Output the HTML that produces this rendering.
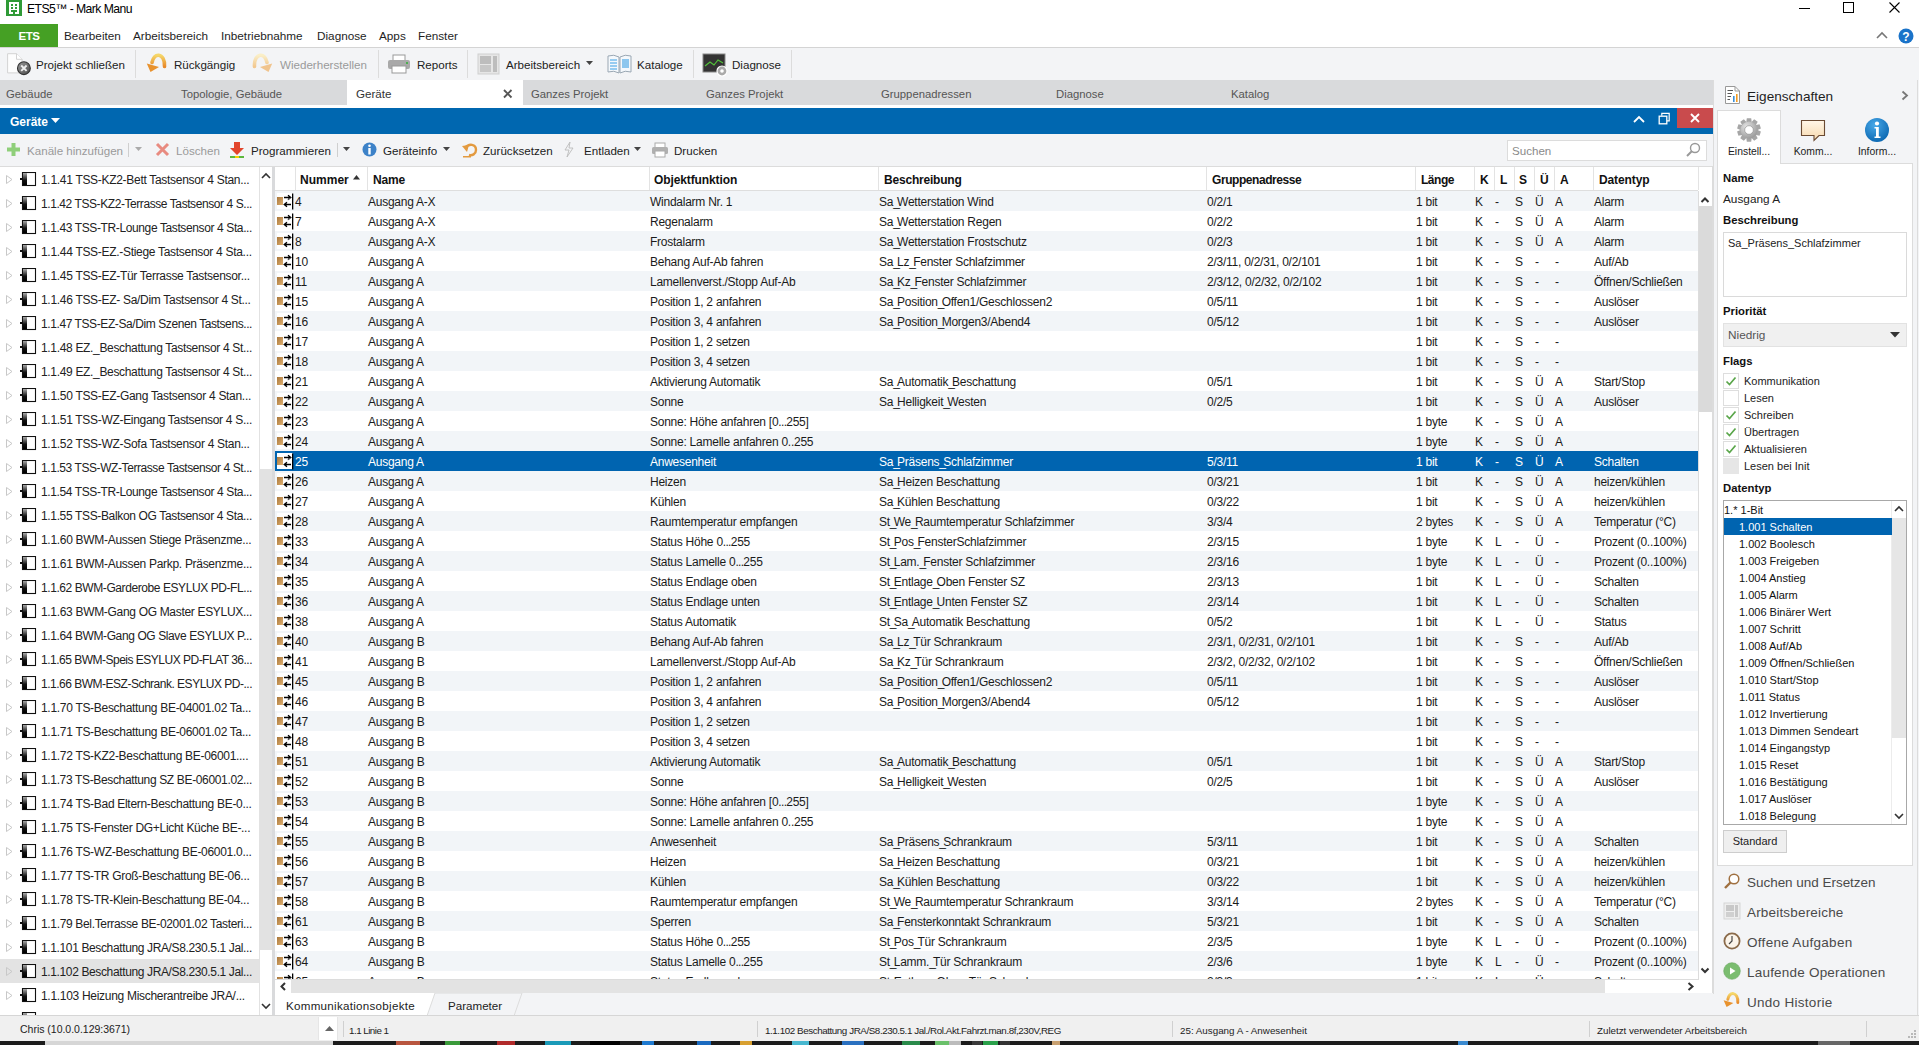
<!DOCTYPE html>
<html><head><meta charset="utf-8"><title>ETS5</title>
<style>
html,body{margin:0;padding:0;width:1919px;height:1045px;overflow:hidden;background:#fff;}
body{position:relative;font-family:"Liberation Sans",sans-serif;}
.t{position:absolute;white-space:nowrap;}
.r{position:absolute;}
.u{font-style:normal;letter-spacing:-2.8px;}
.e{font-style:normal;letter-spacing:-0.7px;}
</style></head><body>
<div class="r" style="left:0px;top:0px;width:1919px;height:24px;background:#ffffff;"></div>
<svg class="r" style="left:6px;top:0px;" width="16" height="16" viewBox="0 0 16 16"><rect x="0" y="0" width="16" height="16" fill="#2f9a36"/><rect x="3" y="2" width="10" height="12" fill="#fff"/><g fill="#2f9a36"><rect x="5" y="4" width="2" height="2"/><rect x="9" y="4" width="2" height="2"/><rect x="5" y="7" width="2" height="2"/><rect x="9" y="7" width="2" height="2"/><rect x="5" y="10" width="2" height="2"/><rect x="9" y="10" width="2" height="2"/><rect x="7" y="10" width="2" height="4"/></g></svg>
<div class="t" style="left:27px;top:0px;font-size:12.2px;line-height:18px;color:#000;letter-spacing:-0.563px;">ETS5™ - Mark Manu</div>
<div class="r" style="left:1799px;top:8px;width:11px;height:1px;background:#000;"></div>
<svg class="r" style="left:1843px;top:2px;" width="12" height="12" viewBox="0 0 12 12"><rect x="0.5" y="0.5" width="10" height="10" fill="none" stroke="#000" stroke-width="1"/></svg>
<svg class="r" style="left:1889px;top:2px;" width="12" height="12" viewBox="0 0 12 12"><path d="M0.5 0.5 L10.5 10.5 M10.5 0.5 L0.5 10.5" stroke="#000" stroke-width="1.1"/></svg>
<div class="r" style="left:0px;top:24px;width:1919px;height:23px;background:#ffffff;"></div>
<div class="r" style="left:0px;top:24px;width:58px;height:23px;background:#45a024;"></div>
<div class="t" style="left:0px;top:25px;font-size:11.5px;line-height:23px;color:#fff;font-weight:bold;width:58px;text-align:center;letter-spacing:-0.5px;">ETS</div>
<div class="t" style="left:64px;top:24px;font-size:11.75px;line-height:23px;color:#1e1e1e;">Bearbeiten</div>
<div class="t" style="left:133px;top:24px;font-size:11.75px;line-height:23px;color:#1e1e1e;">Arbeitsbereich</div>
<div class="t" style="left:221px;top:24px;font-size:11.75px;line-height:23px;color:#1e1e1e;">Inbetriebnahme</div>
<div class="t" style="left:317px;top:24px;font-size:11.75px;line-height:23px;color:#1e1e1e;">Diagnose</div>
<div class="t" style="left:379px;top:24px;font-size:11.75px;line-height:23px;color:#1e1e1e;">Apps</div>
<div class="t" style="left:418px;top:24px;font-size:11.75px;line-height:23px;color:#1e1e1e;">Fenster</div>
<svg class="r" style="left:1876px;top:31px;" width="12" height="8" viewBox="0 0 12 8"><path d="M1 7 L6 2 L11 7" fill="none" stroke="#777" stroke-width="1.6"/></svg>
<svg class="r" style="left:1898px;top:28px;" width="16" height="16" viewBox="0 0 16 16"><circle cx="8" cy="8" r="7.5" fill="#1a73c9"/><text x="8" y="12.5" font-family="Liberation Sans" font-weight="bold" font-size="12" fill="#fff" text-anchor="middle">?</text></svg>
<div class="r" style="left:0px;top:47px;width:1919px;height:1px;background:#d4d4d4;"></div>
<div class="r" style="left:0px;top:48px;width:1919px;height:32px;background:#f3f4f6;"></div>
<svg class="r" style="left:6px;top:52px;" width="26" height="24" viewBox="0 0 26 24"><defs><linearGradient id="xg" x1="0" y1="0" x2="1" y2="1"><stop offset="0" stop-color="#9a9a9a"/><stop offset="1" stop-color="#4a4a4a"/></linearGradient></defs><path d="M1.6 1.7 H10.5 L16.1 7.3 V20.9 H1.6 Z" fill="#fdfdfd" stroke="#d3d3d3" stroke-width="1"/><path d="M10.5 1.7 V7.3 H16.1" fill="#fff" stroke="#d3d3d3" stroke-width="1"/><circle cx="17.9" cy="16.2" r="6.4" fill="url(#xg)" stroke="#333" stroke-width="1.1"/><path d="M15.2 13.5 L20.6 18.9 M20.6 13.5 L15.2 18.9" stroke="#eee" stroke-width="1.9"/></svg>
<div class="t" style="left:36px;top:49px;font-size:11.6px;line-height:32px;color:#222;">Projekt schließen</div>
<div class="r" style="left:135px;top:50px;width:1px;height:28px;background:#dcdcdc;"></div>
<svg class="r" style="left:146px;top:52px;" width="22" height="22" viewBox="0 0 22 22"><defs><linearGradient id="ug" x1="0" y1="0" x2="0" y2="1"><stop offset="0" stop-color="#f5d76a"/><stop offset="1" stop-color="#e88a2a"/></linearGradient><linearGradient id="rg" x1="0" y1="0" x2="0" y2="1"><stop offset="0" stop-color="#faefc8"/><stop offset="1" stop-color="#f2c890"/></linearGradient></defs><path d="M18.5 14.5 C19 7.5 16 3.5 12.8 3.2 C9.5 3 7 6 6 10.5" fill="none" stroke="url(#ug)" stroke-width="3.6" stroke-linecap="round"/><path d="M0.8 11.5 L4.5 20 L13 15 Z" fill="#e8922e"/></svg>
<div class="t" style="left:174px;top:49px;font-size:11.6px;line-height:32px;color:#222;">Rückgängig</div>
<svg class="r" style="left:251px;top:52px;" width="22" height="22" viewBox="0 0 22 22"><g transform="translate(22,0) scale(-1,1)"><path d="M18.5 14.5 C19 7.5 16 3.5 12.8 3.2 C9.5 3 7 6 6 10.5" fill="none" stroke="url(#rg)" stroke-width="3.6" stroke-linecap="round"/><path d="M0.8 11.5 L4.5 20 L13 15 Z" fill="#f0c48e"/></g></svg>
<div class="t" style="left:280px;top:49px;font-size:11.6px;line-height:32px;color:#9a9a9a;">Wiederherstellen</div>
<div class="r" style="left:378px;top:50px;width:1px;height:28px;background:#dcdcdc;"></div>
<svg class="r" style="left:387px;top:54px;" width="24" height="20" viewBox="0 0 24 20"><rect x="6" y="1" width="12" height="6" fill="#fff" stroke="#999"/><rect x="1" y="6" width="22" height="9" rx="2" fill="#a9a9a9"/><rect x="5" y="12" width="14" height="7" fill="#fff" stroke="#999"/><rect x="19" y="8" width="2" height="2" fill="#4caf50"/></svg>
<div class="t" style="left:417px;top:49px;font-size:11.6px;line-height:32px;color:#222;">Reports</div>
<div class="r" style="left:467px;top:50px;width:1px;height:28px;background:#dcdcdc;"></div>
<svg class="r" style="left:477px;top:53px;" width="24" height="22" viewBox="0 0 24 22"><rect x="1" y="1" width="21" height="20" fill="#e6e6e6" stroke="#cfcfcf"/><rect x="3" y="3" width="11" height="8" fill="#bdbdbd"/><rect x="3" y="12" width="11" height="7" fill="#c7c7c7"/><rect x="16" y="3" width="4" height="16" fill="#bdbdbd"/></svg>
<div class="t" style="left:506px;top:49px;font-size:11.6px;line-height:32px;color:#222;">Arbeitsbereich</div>
<svg class="r" style="left:586px;top:61px;" width="8" height="5" viewBox="0 0 8 5"><path d="M0 0 H7 L3.5 4 Z" fill="#444"/></svg>
<svg class="r" style="left:607px;top:53px;" width="26" height="22" viewBox="0 0 26 22"><path d="M1 3 Q7 1 12 4 V20 Q7 17 1 19 Z" fill="#f4f8fc" stroke="#9aa7b3"/><path d="M24 3 Q18 1 13 4 V20 Q18 17 24 19 Z" fill="#f4f8fc" stroke="#9aa7b3"/><path d="M3 7 H10 M3 10 H10 M3 13 H10 M3 16 H10" stroke="#3aa0e6" stroke-width="1"/><rect x="15" y="6" width="7" height="9" fill="#8cc6ee"/></svg>
<div class="t" style="left:637px;top:49px;font-size:11.6px;line-height:32px;color:#222;">Kataloge</div>
<div class="r" style="left:693px;top:50px;width:1px;height:28px;background:#dcdcdc;"></div>
<svg class="r" style="left:702px;top:53px;" width="26" height="24" viewBox="0 0 26 24"><rect x="1" y="1" width="22" height="18" fill="#333" stroke="#888"/><path d="M3 13 L8 9 L12 12 L16 7 L21 10" fill="none" stroke="#52c03a" stroke-width="1.2"/><circle cx="20" cy="18" r="5" fill="#aaa" stroke="#fff" stroke-width="1.2"/><circle cx="20" cy="18" r="1.8" fill="#fff"/></svg>
<div class="t" style="left:732px;top:49px;font-size:11.6px;line-height:32px;color:#222;">Diagnose</div>
<div class="r" style="left:791px;top:50px;width:1px;height:28px;background:#dcdcdc;"></div>
<div class="r" style="left:0px;top:80px;width:1713px;height:25px;background:#d9dadc;"></div>
<div class="t" style="left:6px;top:80px;font-size:11.3px;line-height:28px;color:#555;">Gebäude</div>
<div class="t" style="left:181px;top:80px;font-size:11.3px;line-height:28px;color:#555;">Topologie, Gebäude</div>
<div class="t" style="left:531px;top:80px;font-size:11.3px;line-height:28px;color:#555;">Ganzes Projekt</div>
<div class="t" style="left:706px;top:80px;font-size:11.3px;line-height:28px;color:#555;">Ganzes Projekt</div>
<div class="t" style="left:881px;top:80px;font-size:11.3px;line-height:28px;color:#555;">Gruppenadressen</div>
<div class="t" style="left:1056px;top:80px;font-size:11.3px;line-height:28px;color:#555;">Diagnose</div>
<div class="t" style="left:1231px;top:80px;font-size:11.3px;line-height:28px;color:#555;">Katalog</div>
<div class="r" style="left:347px;top:80px;width:176px;height:25px;background:#ffffff;"></div>
<div class="t" style="left:356px;top:80px;font-size:11.6px;line-height:28px;color:#333;">Geräte</div>
<svg class="r" style="left:503px;top:89px;" width="10" height="10" viewBox="0 0 10 10"><path d="M1 1 L8.5 8.5 M8.5 1 L1 8.5" stroke="#555" stroke-width="1.9"/></svg>
<div class="r" style="left:0px;top:105px;width:1713px;height:3px;background:#ffffff;"></div>
<div class="r" style="left:0px;top:108px;width:1713px;height:26px;background:#0067b0;"></div>
<div class="t" style="left:10px;top:109px;font-size:12px;line-height:26px;color:#fff;font-weight:bold;">Geräte</div>
<svg class="r" style="left:51px;top:118px;" width="9" height="6" viewBox="0 0 9 6"><path d="M0 0 H9 L4.5 5 Z" fill="#fff"/></svg>
<svg class="r" style="left:1633px;top:115px;" width="12" height="8" viewBox="0 0 12 8"><path d="M1 7 L6 2 L11 7" fill="none" stroke="#fff" stroke-width="1.8"/></svg>
<svg class="r" style="left:1658px;top:112px;" width="13" height="13" viewBox="0 0 13 13"><rect x="1.2" y="4.2" width="7.6" height="7.6" fill="none" stroke="#fff" stroke-width="1.3"/><path d="M3.8 3.8 V1.3 H11.2 V8.8 H9" fill="none" stroke="#fff" stroke-width="1.2"/></svg>
<div class="r" style="left:1677px;top:108px;width:36px;height:20px;background:#c94b4d;"></div>
<svg class="r" style="left:1690px;top:113px;" width="10" height="10" viewBox="0 0 10 10"><path d="M1 1 L9 9 M9 1 L1 9" stroke="#fff" stroke-width="1.9"/></svg>
<div class="r" style="left:0px;top:134px;width:1713px;height:32px;background:#f3f4f6;"></div>
<svg class="r" style="left:6px;top:142px;" width="15" height="15" viewBox="0 0 15 15"><rect x="5.5" y="1" width="4" height="13" fill="#8fcf7a"/><rect x="1" y="5.5" width="13" height="4" fill="#8fcf7a"/></svg>
<div class="t" style="left:27px;top:135px;font-size:11.6px;line-height:32px;color:#9a9a9a;">Kanäle hinzufügen</div>
<div class="r" style="left:128px;top:143px;width:1px;height:14px;background:#cfcfcf;"></div>
<svg class="r" style="left:135px;top:147px;" width="8" height="5" viewBox="0 0 8 5"><path d="M0 0 H7 L3.5 4 Z" fill="#aaa"/></svg>
<svg class="r" style="left:155px;top:142px;" width="15" height="15" viewBox="0 0 15 15"><path d="M2 2 L13 13 M13 2 L2 13" stroke="#e88b80" stroke-width="3"/></svg>
<div class="t" style="left:176px;top:135px;font-size:11.6px;line-height:32px;color:#9a9a9a;">Löschen</div>
<svg class="r" style="left:229px;top:141px;" width="16" height="17" viewBox="0 0 16 17"><path d="M5 1 H11 V7 H15 L8 14 L1 7 H5 Z" fill="#e2452c"/><rect x="1" y="15" width="14" height="2" fill="#5cb83c"/><rect x="6" y="15" width="4" height="2" fill="#f5d000"/></svg>
<div class="t" style="left:251px;top:135px;font-size:11.6px;line-height:32px;color:#222;">Programmieren</div>
<div class="r" style="left:337px;top:143px;width:1px;height:14px;background:#cfcfcf;"></div>
<svg class="r" style="left:343px;top:147px;" width="8" height="5" viewBox="0 0 8 5"><path d="M0 0 H7 L3.5 4 Z" fill="#444"/></svg>
<svg class="r" style="left:362px;top:142px;" width="15" height="15" viewBox="0 0 15 15"><circle cx="7.5" cy="7.5" r="7" fill="#3d82c8"/><rect x="6.3" y="6" width="2.4" height="6.5" fill="#fff"/><circle cx="7.5" cy="3.8" r="1.3" fill="#fff"/></svg>
<div class="t" style="left:383px;top:135px;font-size:11.6px;line-height:32px;color:#222;">Geräteinfo</div>
<svg class="r" style="left:443px;top:147px;" width="8" height="5" viewBox="0 0 8 5"><path d="M0 0 H7 L3.5 4 Z" fill="#444"/></svg>
<svg class="r" style="left:461px;top:142px;" width="17" height="16" viewBox="0 0 17 16"><path d="M4 6 C8 1 15 2 15 8 C15 12 11 14 8 13" fill="none" stroke="#e39a3f" stroke-width="2.4"/><path d="M1 4 L6 10 L8 3 Z" fill="#e39a3f"/><rect x="2" y="14" width="8" height="1.5" fill="#e39a3f"/></svg>
<div class="t" style="left:483px;top:135px;font-size:11.6px;line-height:32px;color:#222;">Zurücksetzen</div>
<svg class="r" style="left:563px;top:141px;" width="12" height="17" viewBox="0 0 12 17"><path d="M7 1 L2 9 H6 L4 16 L10 7 H6 Z" fill="none" stroke="#bbb" stroke-width="0.9"/></svg>
<div class="t" style="left:584px;top:135px;font-size:11.6px;line-height:32px;color:#222;">Entladen</div>
<svg class="r" style="left:634px;top:147px;" width="8" height="5" viewBox="0 0 8 5"><path d="M0 0 H7 L3.5 4 Z" fill="#444"/></svg>
<svg class="r" style="left:651px;top:142px;" width="18" height="16" viewBox="0 0 18 16"><rect x="4" y="1" width="10" height="5" fill="#fff" stroke="#aaa"/><rect x="1" y="5" width="16" height="7" rx="1.5" fill="#b0b0b0"/><rect x="4" y="9" width="10" height="6" fill="#fff" stroke="#aaa"/></svg>
<div class="t" style="left:674px;top:135px;font-size:11.6px;line-height:32px;color:#222;">Drucken</div>
<div class="r" style="left:1507px;top:140px;width:200px;height:21px;background:#ffffff;border:1px solid #dcdcdc;box-sizing:border-box;"></div>
<div class="t" style="left:1512px;top:140px;font-size:11.6px;line-height:21px;color:#8a8a8a;">Suchen</div>
<svg class="r" style="left:1685px;top:142px;" width="16" height="16" viewBox="0 0 16 16"><circle cx="10" cy="6" r="4.5" fill="none" stroke="#999" stroke-width="1.4"/><path d="M7 9 L2 14" stroke="#999" stroke-width="2"/></svg>
<div class="r" style="left:0px;top:166px;width:1713px;height:1px;background:#dcdcdc;"></div>
<div class="r" style="left:0px;top:167px;width:259px;height:849px;background:#ffffff;"></div>
<svg width="0" height="0" style="position:absolute"><defs><linearGradient id="dg" x1="0" y1="0" x2="0" y2="1"><stop offset="0" stop-color="#aaa"/><stop offset="0.6" stop-color="#111"/><stop offset="1" stop-color="#000"/></linearGradient></defs></svg>
<svg class="r" style="left:6px;top:175px;" width="7" height="9" viewBox="0 0 7 9"><path d="M0.5 0.5 L6 4.5 L0.5 8.5 Z" fill="none" stroke="#c8c8c8" stroke-width="1"/></svg>
<svg class="r" style="left:20px;top:172px;" width="17" height="15" viewBox="0 0 17 15"><path d="M22.5 6.5 H21 V8.5 H22.5" fill="#000"/><rect x="2.5" y="0.5" width="13" height="13" fill="#fff" stroke="#111" stroke-width="1.1"/><rect x="3" y="1" width="4" height="12" fill="url(#dg)"/><rect x="0" y="6" width="2.5" height="2" fill="#111"/></svg>
<div class="t" style="left:41px;top:168px;font-size:12px;line-height:24px;color:#222;letter-spacing:-0.3px;">1.1.41 TSS-KZ2-Bett Tastsensor 4 Stan...</div>
<svg class="r" style="left:6px;top:199px;" width="7" height="9" viewBox="0 0 7 9"><path d="M0.5 0.5 L6 4.5 L0.5 8.5 Z" fill="none" stroke="#c8c8c8" stroke-width="1"/></svg>
<svg class="r" style="left:20px;top:196px;" width="17" height="15" viewBox="0 0 17 15"><path d="M22.5 6.5 H21 V8.5 H22.5" fill="#000"/><rect x="2.5" y="0.5" width="13" height="13" fill="#fff" stroke="#111" stroke-width="1.1"/><rect x="3" y="1" width="4" height="12" fill="url(#dg)"/><rect x="0" y="6" width="2.5" height="2" fill="#111"/></svg>
<div class="t" style="left:41px;top:192px;font-size:12px;line-height:24px;color:#222;letter-spacing:-0.423px;">1.1.42 TSS-KZ2-Terrasse Tastsensor 4 S...</div>
<svg class="r" style="left:6px;top:223px;" width="7" height="9" viewBox="0 0 7 9"><path d="M0.5 0.5 L6 4.5 L0.5 8.5 Z" fill="none" stroke="#c8c8c8" stroke-width="1"/></svg>
<svg class="r" style="left:20px;top:220px;" width="17" height="15" viewBox="0 0 17 15"><path d="M22.5 6.5 H21 V8.5 H22.5" fill="#000"/><rect x="2.5" y="0.5" width="13" height="13" fill="#fff" stroke="#111" stroke-width="1.1"/><rect x="3" y="1" width="4" height="12" fill="url(#dg)"/><rect x="0" y="6" width="2.5" height="2" fill="#111"/></svg>
<div class="t" style="left:41px;top:216px;font-size:12px;line-height:24px;color:#222;letter-spacing:-0.384px;">1.1.43 TSS-TR-Lounge Tastsensor 4 Sta...</div>
<svg class="r" style="left:6px;top:247px;" width="7" height="9" viewBox="0 0 7 9"><path d="M0.5 0.5 L6 4.5 L0.5 8.5 Z" fill="none" stroke="#c8c8c8" stroke-width="1"/></svg>
<svg class="r" style="left:20px;top:244px;" width="17" height="15" viewBox="0 0 17 15"><path d="M22.5 6.5 H21 V8.5 H22.5" fill="#000"/><rect x="2.5" y="0.5" width="13" height="13" fill="#fff" stroke="#111" stroke-width="1.1"/><rect x="3" y="1" width="4" height="12" fill="url(#dg)"/><rect x="0" y="6" width="2.5" height="2" fill="#111"/></svg>
<div class="t" style="left:41px;top:240px;font-size:12px;line-height:24px;color:#222;letter-spacing:-0.3px;">1.1.44 TSS-EZ.-Stiege Tastsensor 4 Sta...</div>
<svg class="r" style="left:6px;top:271px;" width="7" height="9" viewBox="0 0 7 9"><path d="M0.5 0.5 L6 4.5 L0.5 8.5 Z" fill="none" stroke="#c8c8c8" stroke-width="1"/></svg>
<svg class="r" style="left:20px;top:268px;" width="17" height="15" viewBox="0 0 17 15"><path d="M22.5 6.5 H21 V8.5 H22.5" fill="#000"/><rect x="2.5" y="0.5" width="13" height="13" fill="#fff" stroke="#111" stroke-width="1.1"/><rect x="3" y="1" width="4" height="12" fill="url(#dg)"/><rect x="0" y="6" width="2.5" height="2" fill="#111"/></svg>
<div class="t" style="left:41px;top:264px;font-size:12px;line-height:24px;color:#222;letter-spacing:-0.3px;">1.1.45 TSS-EZ-Tür Terrasse Tastsensor...</div>
<svg class="r" style="left:6px;top:295px;" width="7" height="9" viewBox="0 0 7 9"><path d="M0.5 0.5 L6 4.5 L0.5 8.5 Z" fill="none" stroke="#c8c8c8" stroke-width="1"/></svg>
<svg class="r" style="left:20px;top:292px;" width="17" height="15" viewBox="0 0 17 15"><path d="M22.5 6.5 H21 V8.5 H22.5" fill="#000"/><rect x="2.5" y="0.5" width="13" height="13" fill="#fff" stroke="#111" stroke-width="1.1"/><rect x="3" y="1" width="4" height="12" fill="url(#dg)"/><rect x="0" y="6" width="2.5" height="2" fill="#111"/></svg>
<div class="t" style="left:41px;top:288px;font-size:12px;line-height:24px;color:#222;letter-spacing:-0.3px;">1.1.46 TSS-EZ- Sa/Dim Tastsensor 4 St...</div>
<svg class="r" style="left:6px;top:319px;" width="7" height="9" viewBox="0 0 7 9"><path d="M0.5 0.5 L6 4.5 L0.5 8.5 Z" fill="none" stroke="#c8c8c8" stroke-width="1"/></svg>
<svg class="r" style="left:20px;top:316px;" width="17" height="15" viewBox="0 0 17 15"><path d="M22.5 6.5 H21 V8.5 H22.5" fill="#000"/><rect x="2.5" y="0.5" width="13" height="13" fill="#fff" stroke="#111" stroke-width="1.1"/><rect x="3" y="1" width="4" height="12" fill="url(#dg)"/><rect x="0" y="6" width="2.5" height="2" fill="#111"/></svg>
<div class="t" style="left:41px;top:312px;font-size:12px;line-height:24px;color:#222;letter-spacing:-0.410px;">1.1.47 TSS-EZ-Sa/Dim Szenen Tastsens...</div>
<svg class="r" style="left:6px;top:343px;" width="7" height="9" viewBox="0 0 7 9"><path d="M0.5 0.5 L6 4.5 L0.5 8.5 Z" fill="none" stroke="#c8c8c8" stroke-width="1"/></svg>
<svg class="r" style="left:20px;top:340px;" width="17" height="15" viewBox="0 0 17 15"><path d="M22.5 6.5 H21 V8.5 H22.5" fill="#000"/><rect x="2.5" y="0.5" width="13" height="13" fill="#fff" stroke="#111" stroke-width="1.1"/><rect x="3" y="1" width="4" height="12" fill="url(#dg)"/><rect x="0" y="6" width="2.5" height="2" fill="#111"/></svg>
<div class="t" style="left:41px;top:336px;font-size:12px;line-height:24px;color:#222;letter-spacing:-0.331px;">1.1.48 EZ._Beschattung Tastsensor 4 St...</div>
<svg class="r" style="left:6px;top:367px;" width="7" height="9" viewBox="0 0 7 9"><path d="M0.5 0.5 L6 4.5 L0.5 8.5 Z" fill="none" stroke="#c8c8c8" stroke-width="1"/></svg>
<svg class="r" style="left:20px;top:364px;" width="17" height="15" viewBox="0 0 17 15"><path d="M22.5 6.5 H21 V8.5 H22.5" fill="#000"/><rect x="2.5" y="0.5" width="13" height="13" fill="#fff" stroke="#111" stroke-width="1.1"/><rect x="3" y="1" width="4" height="12" fill="url(#dg)"/><rect x="0" y="6" width="2.5" height="2" fill="#111"/></svg>
<div class="t" style="left:41px;top:360px;font-size:12px;line-height:24px;color:#222;letter-spacing:-0.331px;">1.1.49 EZ._Beschattung Tastsensor 4 St...</div>
<svg class="r" style="left:6px;top:391px;" width="7" height="9" viewBox="0 0 7 9"><path d="M0.5 0.5 L6 4.5 L0.5 8.5 Z" fill="none" stroke="#c8c8c8" stroke-width="1"/></svg>
<svg class="r" style="left:20px;top:388px;" width="17" height="15" viewBox="0 0 17 15"><path d="M22.5 6.5 H21 V8.5 H22.5" fill="#000"/><rect x="2.5" y="0.5" width="13" height="13" fill="#fff" stroke="#111" stroke-width="1.1"/><rect x="3" y="1" width="4" height="12" fill="url(#dg)"/><rect x="0" y="6" width="2.5" height="2" fill="#111"/></svg>
<div class="t" style="left:41px;top:384px;font-size:12px;line-height:24px;color:#222;letter-spacing:-0.3px;">1.1.50 TSS-EZ-Gang Tastsensor 4 Stan...</div>
<svg class="r" style="left:6px;top:415px;" width="7" height="9" viewBox="0 0 7 9"><path d="M0.5 0.5 L6 4.5 L0.5 8.5 Z" fill="none" stroke="#c8c8c8" stroke-width="1"/></svg>
<svg class="r" style="left:20px;top:412px;" width="17" height="15" viewBox="0 0 17 15"><path d="M22.5 6.5 H21 V8.5 H22.5" fill="#000"/><rect x="2.5" y="0.5" width="13" height="13" fill="#fff" stroke="#111" stroke-width="1.1"/><rect x="3" y="1" width="4" height="12" fill="url(#dg)"/><rect x="0" y="6" width="2.5" height="2" fill="#111"/></svg>
<div class="t" style="left:41px;top:408px;font-size:12px;line-height:24px;color:#222;letter-spacing:-0.308px;">1.1.51 TSS-WZ-Eingang Tastsensor 4 S...</div>
<svg class="r" style="left:6px;top:439px;" width="7" height="9" viewBox="0 0 7 9"><path d="M0.5 0.5 L6 4.5 L0.5 8.5 Z" fill="none" stroke="#c8c8c8" stroke-width="1"/></svg>
<svg class="r" style="left:20px;top:436px;" width="17" height="15" viewBox="0 0 17 15"><path d="M22.5 6.5 H21 V8.5 H22.5" fill="#000"/><rect x="2.5" y="0.5" width="13" height="13" fill="#fff" stroke="#111" stroke-width="1.1"/><rect x="3" y="1" width="4" height="12" fill="url(#dg)"/><rect x="0" y="6" width="2.5" height="2" fill="#111"/></svg>
<div class="t" style="left:41px;top:432px;font-size:12px;line-height:24px;color:#222;letter-spacing:-0.3px;">1.1.52 TSS-WZ-Sofa Tastsensor 4 Stan...</div>
<svg class="r" style="left:6px;top:463px;" width="7" height="9" viewBox="0 0 7 9"><path d="M0.5 0.5 L6 4.5 L0.5 8.5 Z" fill="none" stroke="#c8c8c8" stroke-width="1"/></svg>
<svg class="r" style="left:20px;top:460px;" width="17" height="15" viewBox="0 0 17 15"><path d="M22.5 6.5 H21 V8.5 H22.5" fill="#000"/><rect x="2.5" y="0.5" width="13" height="13" fill="#fff" stroke="#111" stroke-width="1.1"/><rect x="3" y="1" width="4" height="12" fill="url(#dg)"/><rect x="0" y="6" width="2.5" height="2" fill="#111"/></svg>
<div class="t" style="left:41px;top:456px;font-size:12px;line-height:24px;color:#222;letter-spacing:-0.422px;">1.1.53 TSS-WZ-Terrasse Tastsensor 4 St...</div>
<svg class="r" style="left:6px;top:487px;" width="7" height="9" viewBox="0 0 7 9"><path d="M0.5 0.5 L6 4.5 L0.5 8.5 Z" fill="none" stroke="#c8c8c8" stroke-width="1"/></svg>
<svg class="r" style="left:20px;top:484px;" width="17" height="15" viewBox="0 0 17 15"><path d="M22.5 6.5 H21 V8.5 H22.5" fill="#000"/><rect x="2.5" y="0.5" width="13" height="13" fill="#fff" stroke="#111" stroke-width="1.1"/><rect x="3" y="1" width="4" height="12" fill="url(#dg)"/><rect x="0" y="6" width="2.5" height="2" fill="#111"/></svg>
<div class="t" style="left:41px;top:480px;font-size:12px;line-height:24px;color:#222;letter-spacing:-0.384px;">1.1.54 TSS-TR-Lounge Tastsensor 4 Sta...</div>
<svg class="r" style="left:6px;top:511px;" width="7" height="9" viewBox="0 0 7 9"><path d="M0.5 0.5 L6 4.5 L0.5 8.5 Z" fill="none" stroke="#c8c8c8" stroke-width="1"/></svg>
<svg class="r" style="left:20px;top:508px;" width="17" height="15" viewBox="0 0 17 15"><path d="M22.5 6.5 H21 V8.5 H22.5" fill="#000"/><rect x="2.5" y="0.5" width="13" height="13" fill="#fff" stroke="#111" stroke-width="1.1"/><rect x="3" y="1" width="4" height="12" fill="url(#dg)"/><rect x="0" y="6" width="2.5" height="2" fill="#111"/></svg>
<div class="t" style="left:41px;top:504px;font-size:12px;line-height:24px;color:#222;letter-spacing:-0.350px;">1.1.55 TSS-Balkon OG Tastsensor 4 Sta...</div>
<svg class="r" style="left:6px;top:535px;" width="7" height="9" viewBox="0 0 7 9"><path d="M0.5 0.5 L6 4.5 L0.5 8.5 Z" fill="none" stroke="#c8c8c8" stroke-width="1"/></svg>
<svg class="r" style="left:20px;top:532px;" width="17" height="15" viewBox="0 0 17 15"><path d="M22.5 6.5 H21 V8.5 H22.5" fill="#000"/><rect x="2.5" y="0.5" width="13" height="13" fill="#fff" stroke="#111" stroke-width="1.1"/><rect x="3" y="1" width="4" height="12" fill="url(#dg)"/><rect x="0" y="6" width="2.5" height="2" fill="#111"/></svg>
<div class="t" style="left:41px;top:528px;font-size:12px;line-height:24px;color:#222;letter-spacing:-0.3px;">1.1.60 BWM-Aussen Stiege Präsenzme...</div>
<svg class="r" style="left:6px;top:559px;" width="7" height="9" viewBox="0 0 7 9"><path d="M0.5 0.5 L6 4.5 L0.5 8.5 Z" fill="none" stroke="#c8c8c8" stroke-width="1"/></svg>
<svg class="r" style="left:20px;top:556px;" width="17" height="15" viewBox="0 0 17 15"><path d="M22.5 6.5 H21 V8.5 H22.5" fill="#000"/><rect x="2.5" y="0.5" width="13" height="13" fill="#fff" stroke="#111" stroke-width="1.1"/><rect x="3" y="1" width="4" height="12" fill="url(#dg)"/><rect x="0" y="6" width="2.5" height="2" fill="#111"/></svg>
<div class="t" style="left:41px;top:552px;font-size:12px;line-height:24px;color:#222;letter-spacing:-0.3px;">1.1.61 BWM-Aussen Parkp. Präsenzme...</div>
<svg class="r" style="left:6px;top:583px;" width="7" height="9" viewBox="0 0 7 9"><path d="M0.5 0.5 L6 4.5 L0.5 8.5 Z" fill="none" stroke="#c8c8c8" stroke-width="1"/></svg>
<svg class="r" style="left:20px;top:580px;" width="17" height="15" viewBox="0 0 17 15"><path d="M22.5 6.5 H21 V8.5 H22.5" fill="#000"/><rect x="2.5" y="0.5" width="13" height="13" fill="#fff" stroke="#111" stroke-width="1.1"/><rect x="3" y="1" width="4" height="12" fill="url(#dg)"/><rect x="0" y="6" width="2.5" height="2" fill="#111"/></svg>
<div class="t" style="left:41px;top:576px;font-size:12px;line-height:24px;color:#222;letter-spacing:-0.419px;">1.1.62 BWM-Garderobe ESYLUX PD-FL...</div>
<svg class="r" style="left:6px;top:607px;" width="7" height="9" viewBox="0 0 7 9"><path d="M0.5 0.5 L6 4.5 L0.5 8.5 Z" fill="none" stroke="#c8c8c8" stroke-width="1"/></svg>
<svg class="r" style="left:20px;top:604px;" width="17" height="15" viewBox="0 0 17 15"><path d="M22.5 6.5 H21 V8.5 H22.5" fill="#000"/><rect x="2.5" y="0.5" width="13" height="13" fill="#fff" stroke="#111" stroke-width="1.1"/><rect x="3" y="1" width="4" height="12" fill="url(#dg)"/><rect x="0" y="6" width="2.5" height="2" fill="#111"/></svg>
<div class="t" style="left:41px;top:600px;font-size:12px;line-height:24px;color:#222;letter-spacing:-0.317px;">1.1.63 BWM-Gang OG Master ESYLUX...</div>
<svg class="r" style="left:6px;top:631px;" width="7" height="9" viewBox="0 0 7 9"><path d="M0.5 0.5 L6 4.5 L0.5 8.5 Z" fill="none" stroke="#c8c8c8" stroke-width="1"/></svg>
<svg class="r" style="left:20px;top:628px;" width="17" height="15" viewBox="0 0 17 15"><path d="M22.5 6.5 H21 V8.5 H22.5" fill="#000"/><rect x="2.5" y="0.5" width="13" height="13" fill="#fff" stroke="#111" stroke-width="1.1"/><rect x="3" y="1" width="4" height="12" fill="url(#dg)"/><rect x="0" y="6" width="2.5" height="2" fill="#111"/></svg>
<div class="t" style="left:41px;top:624px;font-size:12px;line-height:24px;color:#222;letter-spacing:-0.395px;">1.1.64 BWM-Gang OG Slave ESYLUX P...</div>
<svg class="r" style="left:6px;top:655px;" width="7" height="9" viewBox="0 0 7 9"><path d="M0.5 0.5 L6 4.5 L0.5 8.5 Z" fill="none" stroke="#c8c8c8" stroke-width="1"/></svg>
<svg class="r" style="left:20px;top:652px;" width="17" height="15" viewBox="0 0 17 15"><path d="M22.5 6.5 H21 V8.5 H22.5" fill="#000"/><rect x="2.5" y="0.5" width="13" height="13" fill="#fff" stroke="#111" stroke-width="1.1"/><rect x="3" y="1" width="4" height="12" fill="url(#dg)"/><rect x="0" y="6" width="2.5" height="2" fill="#111"/></svg>
<div class="t" style="left:41px;top:648px;font-size:12px;line-height:24px;color:#222;letter-spacing:-0.504px;">1.1.65 BWM-Speis ESYLUX PD-FLAT 36...</div>
<svg class="r" style="left:6px;top:679px;" width="7" height="9" viewBox="0 0 7 9"><path d="M0.5 0.5 L6 4.5 L0.5 8.5 Z" fill="none" stroke="#c8c8c8" stroke-width="1"/></svg>
<svg class="r" style="left:20px;top:676px;" width="17" height="15" viewBox="0 0 17 15"><path d="M22.5 6.5 H21 V8.5 H22.5" fill="#000"/><rect x="2.5" y="0.5" width="13" height="13" fill="#fff" stroke="#111" stroke-width="1.1"/><rect x="3" y="1" width="4" height="12" fill="url(#dg)"/><rect x="0" y="6" width="2.5" height="2" fill="#111"/></svg>
<div class="t" style="left:41px;top:672px;font-size:12px;line-height:24px;color:#222;letter-spacing:-0.497px;">1.1.66 BWM-ESZ-Schrank. ESYLUX PD-...</div>
<svg class="r" style="left:6px;top:703px;" width="7" height="9" viewBox="0 0 7 9"><path d="M0.5 0.5 L6 4.5 L0.5 8.5 Z" fill="none" stroke="#c8c8c8" stroke-width="1"/></svg>
<svg class="r" style="left:20px;top:700px;" width="17" height="15" viewBox="0 0 17 15"><path d="M22.5 6.5 H21 V8.5 H22.5" fill="#000"/><rect x="2.5" y="0.5" width="13" height="13" fill="#fff" stroke="#111" stroke-width="1.1"/><rect x="3" y="1" width="4" height="12" fill="url(#dg)"/><rect x="0" y="6" width="2.5" height="2" fill="#111"/></svg>
<div class="t" style="left:41px;top:696px;font-size:12px;line-height:24px;color:#222;letter-spacing:-0.3px;">1.1.70 TS-Beschattung BE-04001.02 Ta...</div>
<svg class="r" style="left:6px;top:727px;" width="7" height="9" viewBox="0 0 7 9"><path d="M0.5 0.5 L6 4.5 L0.5 8.5 Z" fill="none" stroke="#c8c8c8" stroke-width="1"/></svg>
<svg class="r" style="left:20px;top:724px;" width="17" height="15" viewBox="0 0 17 15"><path d="M22.5 6.5 H21 V8.5 H22.5" fill="#000"/><rect x="2.5" y="0.5" width="13" height="13" fill="#fff" stroke="#111" stroke-width="1.1"/><rect x="3" y="1" width="4" height="12" fill="url(#dg)"/><rect x="0" y="6" width="2.5" height="2" fill="#111"/></svg>
<div class="t" style="left:41px;top:720px;font-size:12px;line-height:24px;color:#222;letter-spacing:-0.3px;">1.1.71 TS-Beschattung BE-06001.02 Ta...</div>
<svg class="r" style="left:6px;top:751px;" width="7" height="9" viewBox="0 0 7 9"><path d="M0.5 0.5 L6 4.5 L0.5 8.5 Z" fill="none" stroke="#c8c8c8" stroke-width="1"/></svg>
<svg class="r" style="left:20px;top:748px;" width="17" height="15" viewBox="0 0 17 15"><path d="M22.5 6.5 H21 V8.5 H22.5" fill="#000"/><rect x="2.5" y="0.5" width="13" height="13" fill="#fff" stroke="#111" stroke-width="1.1"/><rect x="3" y="1" width="4" height="12" fill="url(#dg)"/><rect x="0" y="6" width="2.5" height="2" fill="#111"/></svg>
<div class="t" style="left:41px;top:744px;font-size:12px;line-height:24px;color:#222;letter-spacing:-0.3px;">1.1.72 TS-KZ2-Beschattung BE-06001....</div>
<svg class="r" style="left:6px;top:775px;" width="7" height="9" viewBox="0 0 7 9"><path d="M0.5 0.5 L6 4.5 L0.5 8.5 Z" fill="none" stroke="#c8c8c8" stroke-width="1"/></svg>
<svg class="r" style="left:20px;top:772px;" width="17" height="15" viewBox="0 0 17 15"><path d="M22.5 6.5 H21 V8.5 H22.5" fill="#000"/><rect x="2.5" y="0.5" width="13" height="13" fill="#fff" stroke="#111" stroke-width="1.1"/><rect x="3" y="1" width="4" height="12" fill="url(#dg)"/><rect x="0" y="6" width="2.5" height="2" fill="#111"/></svg>
<div class="t" style="left:41px;top:768px;font-size:12px;line-height:24px;color:#222;letter-spacing:-0.348px;">1.1.73 TS-Beschattung SZ BE-06001.02...</div>
<svg class="r" style="left:6px;top:799px;" width="7" height="9" viewBox="0 0 7 9"><path d="M0.5 0.5 L6 4.5 L0.5 8.5 Z" fill="none" stroke="#c8c8c8" stroke-width="1"/></svg>
<svg class="r" style="left:20px;top:796px;" width="17" height="15" viewBox="0 0 17 15"><path d="M22.5 6.5 H21 V8.5 H22.5" fill="#000"/><rect x="2.5" y="0.5" width="13" height="13" fill="#fff" stroke="#111" stroke-width="1.1"/><rect x="3" y="1" width="4" height="12" fill="url(#dg)"/><rect x="0" y="6" width="2.5" height="2" fill="#111"/></svg>
<div class="t" style="left:41px;top:792px;font-size:12px;line-height:24px;color:#222;letter-spacing:-0.3px;">1.1.74 TS-Bad Eltern-Beschattung BE-0...</div>
<svg class="r" style="left:6px;top:823px;" width="7" height="9" viewBox="0 0 7 9"><path d="M0.5 0.5 L6 4.5 L0.5 8.5 Z" fill="none" stroke="#c8c8c8" stroke-width="1"/></svg>
<svg class="r" style="left:20px;top:820px;" width="17" height="15" viewBox="0 0 17 15"><path d="M22.5 6.5 H21 V8.5 H22.5" fill="#000"/><rect x="2.5" y="0.5" width="13" height="13" fill="#fff" stroke="#111" stroke-width="1.1"/><rect x="3" y="1" width="4" height="12" fill="url(#dg)"/><rect x="0" y="6" width="2.5" height="2" fill="#111"/></svg>
<div class="t" style="left:41px;top:816px;font-size:12px;line-height:24px;color:#222;letter-spacing:-0.3px;">1.1.75 TS-Fenster DG+Licht Küche BE-...</div>
<svg class="r" style="left:6px;top:847px;" width="7" height="9" viewBox="0 0 7 9"><path d="M0.5 0.5 L6 4.5 L0.5 8.5 Z" fill="none" stroke="#c8c8c8" stroke-width="1"/></svg>
<svg class="r" style="left:20px;top:844px;" width="17" height="15" viewBox="0 0 17 15"><path d="M22.5 6.5 H21 V8.5 H22.5" fill="#000"/><rect x="2.5" y="0.5" width="13" height="13" fill="#fff" stroke="#111" stroke-width="1.1"/><rect x="3" y="1" width="4" height="12" fill="url(#dg)"/><rect x="0" y="6" width="2.5" height="2" fill="#111"/></svg>
<div class="t" style="left:41px;top:840px;font-size:12px;line-height:24px;color:#222;letter-spacing:-0.3px;">1.1.76 TS-WZ-Beschattung BE-06001.0...</div>
<svg class="r" style="left:6px;top:871px;" width="7" height="9" viewBox="0 0 7 9"><path d="M0.5 0.5 L6 4.5 L0.5 8.5 Z" fill="none" stroke="#c8c8c8" stroke-width="1"/></svg>
<svg class="r" style="left:20px;top:868px;" width="17" height="15" viewBox="0 0 17 15"><path d="M22.5 6.5 H21 V8.5 H22.5" fill="#000"/><rect x="2.5" y="0.5" width="13" height="13" fill="#fff" stroke="#111" stroke-width="1.1"/><rect x="3" y="1" width="4" height="12" fill="url(#dg)"/><rect x="0" y="6" width="2.5" height="2" fill="#111"/></svg>
<div class="t" style="left:41px;top:864px;font-size:12px;line-height:24px;color:#222;letter-spacing:-0.3px;">1.1.77 TS-TR Groß-Beschattung BE-06...</div>
<svg class="r" style="left:6px;top:895px;" width="7" height="9" viewBox="0 0 7 9"><path d="M0.5 0.5 L6 4.5 L0.5 8.5 Z" fill="none" stroke="#c8c8c8" stroke-width="1"/></svg>
<svg class="r" style="left:20px;top:892px;" width="17" height="15" viewBox="0 0 17 15"><path d="M22.5 6.5 H21 V8.5 H22.5" fill="#000"/><rect x="2.5" y="0.5" width="13" height="13" fill="#fff" stroke="#111" stroke-width="1.1"/><rect x="3" y="1" width="4" height="12" fill="url(#dg)"/><rect x="0" y="6" width="2.5" height="2" fill="#111"/></svg>
<div class="t" style="left:41px;top:888px;font-size:12px;line-height:24px;color:#222;letter-spacing:-0.3px;">1.1.78 TS-TR-Klein-Beschattung BE-04...</div>
<svg class="r" style="left:6px;top:919px;" width="7" height="9" viewBox="0 0 7 9"><path d="M0.5 0.5 L6 4.5 L0.5 8.5 Z" fill="none" stroke="#c8c8c8" stroke-width="1"/></svg>
<svg class="r" style="left:20px;top:916px;" width="17" height="15" viewBox="0 0 17 15"><path d="M22.5 6.5 H21 V8.5 H22.5" fill="#000"/><rect x="2.5" y="0.5" width="13" height="13" fill="#fff" stroke="#111" stroke-width="1.1"/><rect x="3" y="1" width="4" height="12" fill="url(#dg)"/><rect x="0" y="6" width="2.5" height="2" fill="#111"/></svg>
<div class="t" style="left:41px;top:912px;font-size:12px;line-height:24px;color:#222;letter-spacing:-0.339px;">1.1.79 Bel.Terrasse BE-02001.02 Tasteri...</div>
<svg class="r" style="left:6px;top:943px;" width="7" height="9" viewBox="0 0 7 9"><path d="M0.5 0.5 L6 4.5 L0.5 8.5 Z" fill="none" stroke="#c8c8c8" stroke-width="1"/></svg>
<svg class="r" style="left:20px;top:940px;" width="17" height="15" viewBox="0 0 17 15"><path d="M22.5 6.5 H21 V8.5 H22.5" fill="#000"/><rect x="2.5" y="0.5" width="13" height="13" fill="#fff" stroke="#111" stroke-width="1.1"/><rect x="3" y="1" width="4" height="12" fill="url(#dg)"/><rect x="0" y="6" width="2.5" height="2" fill="#111"/></svg>
<div class="t" style="left:41px;top:936px;font-size:12px;line-height:24px;color:#222;letter-spacing:-0.370px;">1.1.101 Beschattung JRA/S8.230.5.1 Jal...</div>
<div class="r" style="left:0px;top:959px;width:259px;height:24px;background:#e3e3e3;"></div>
<svg class="r" style="left:6px;top:967px;" width="7" height="9" viewBox="0 0 7 9"><path d="M0.5 0.5 L6 4.5 L0.5 8.5 Z" fill="none" stroke="#c8c8c8" stroke-width="1"/></svg>
<svg class="r" style="left:20px;top:964px;" width="17" height="15" viewBox="0 0 17 15"><path d="M22.5 6.5 H21 V8.5 H22.5" fill="#000"/><rect x="2.5" y="0.5" width="13" height="13" fill="#fff" stroke="#111" stroke-width="1.1"/><rect x="3" y="1" width="4" height="12" fill="url(#dg)"/><rect x="0" y="6" width="2.5" height="2" fill="#111"/></svg>
<div class="t" style="left:41px;top:960px;font-size:12px;line-height:24px;color:#222;letter-spacing:-0.370px;">1.1.102 Beschattung JRA/S8.230.5.1 Jal...</div>
<svg class="r" style="left:6px;top:991px;" width="7" height="9" viewBox="0 0 7 9"><path d="M0.5 0.5 L6 4.5 L0.5 8.5 Z" fill="none" stroke="#c8c8c8" stroke-width="1"/></svg>
<svg class="r" style="left:20px;top:988px;" width="17" height="15" viewBox="0 0 17 15"><path d="M22.5 6.5 H21 V8.5 H22.5" fill="#000"/><rect x="2.5" y="0.5" width="13" height="13" fill="#fff" stroke="#111" stroke-width="1.1"/><rect x="3" y="1" width="4" height="12" fill="url(#dg)"/><rect x="0" y="6" width="2.5" height="2" fill="#111"/></svg>
<div class="t" style="left:41px;top:984px;font-size:12px;line-height:24px;color:#222;letter-spacing:-0.3px;">1.1.103 Heizung Mischerantreibe JRA/...</div>
<svg class="r" style="left:6px;top:1015px;" width="7" height="9" viewBox="0 0 7 9"><path d="M0.5 0.5 L6 4.5 L0.5 8.5 Z" fill="none" stroke="#c8c8c8" stroke-width="1"/></svg>
<svg class="r" style="left:20px;top:1012px;" width="17" height="15" viewBox="0 0 17 15"><path d="M22.5 6.5 H21 V8.5 H22.5" fill="#000"/><rect x="2.5" y="0.5" width="13" height="13" fill="#fff" stroke="#111" stroke-width="1.1"/><rect x="3" y="1" width="4" height="12" fill="url(#dg)"/><rect x="0" y="6" width="2.5" height="2" fill="#111"/></svg>
<div class="r" style="left:259px;top:167px;width:13px;height:849px;background:#ffffff;border-left:1px solid #e2e2e2;box-sizing:border-box;"></div>
<div class="r" style="left:260px;top:469px;width:12px;height:481px;background:#e2e2e2;"></div>
<svg class="r" style="left:261px;top:172px;" width="10" height="7" viewBox="0 0 10 7"><path d="M1 6 L5 2 L9 6" fill="none" stroke="#333" stroke-width="1.6"/></svg>
<svg class="r" style="left:261px;top:1003px;" width="10" height="7" viewBox="0 0 10 7"><path d="M1 1 L5 5 L9 1" fill="none" stroke="#333" stroke-width="1.6"/></svg>
<div class="r" style="left:272px;top:167px;width:3px;height:849px;background:#d9dadc;"></div>
<div class="r" style="left:275px;top:167px;width:1438px;height:813px;background:#ffffff;"></div>
<div class="r" style="left:295px;top:167px;width:1px;height:23px;background:#e3e3e3;"></div>
<div class="r" style="left:367px;top:167px;width:1px;height:23px;background:#e3e3e3;"></div>
<div class="r" style="left:649px;top:167px;width:1px;height:23px;background:#e3e3e3;"></div>
<div class="r" style="left:878px;top:167px;width:1px;height:23px;background:#e3e3e3;"></div>
<div class="r" style="left:1206px;top:167px;width:1px;height:23px;background:#e3e3e3;"></div>
<div class="r" style="left:1415px;top:167px;width:1px;height:23px;background:#e3e3e3;"></div>
<div class="r" style="left:1474px;top:167px;width:1px;height:23px;background:#e3e3e3;"></div>
<div class="r" style="left:1494px;top:167px;width:1px;height:23px;background:#e3e3e3;"></div>
<div class="r" style="left:1514px;top:167px;width:1px;height:23px;background:#e3e3e3;"></div>
<div class="r" style="left:1534px;top:167px;width:1px;height:23px;background:#e3e3e3;"></div>
<div class="r" style="left:1554px;top:167px;width:1px;height:23px;background:#e3e3e3;"></div>
<div class="r" style="left:1593px;top:167px;width:1px;height:23px;background:#e3e3e3;"></div>
<div class="r" style="left:1698px;top:167px;width:1px;height:23px;background:#e3e3e3;"></div>
<div class="r" style="left:275px;top:190px;width:1423px;height:1px;background:#dedede;"></div>
<div class="t" style="left:300px;top:169px;font-size:12px;line-height:22px;color:#111;font-weight:bold;letter-spacing:0.020px;">Nummer</div>
<div class="t" style="left:373px;top:169px;font-size:12px;line-height:22px;color:#111;font-weight:bold;letter-spacing:-0.2px;">Name</div>
<div class="t" style="left:654px;top:169px;font-size:12px;line-height:22px;color:#111;font-weight:bold;letter-spacing:-0.105px;">Objektfunktion</div>
<div class="t" style="left:884px;top:169px;font-size:12px;line-height:22px;color:#111;font-weight:bold;letter-spacing:-0.2px;">Beschreibung</div>
<div class="t" style="left:1212px;top:169px;font-size:12px;line-height:22px;color:#111;font-weight:bold;letter-spacing:-0.434px;">Gruppenadresse</div>
<div class="t" style="left:1421px;top:169px;font-size:12px;line-height:22px;color:#111;font-weight:bold;letter-spacing:-0.468px;">Länge</div>
<div class="t" style="left:1480px;top:169px;font-size:12px;line-height:22px;color:#111;font-weight:bold;letter-spacing:-0.2px;">K</div>
<div class="t" style="left:1500px;top:169px;font-size:12px;line-height:22px;color:#111;font-weight:bold;letter-spacing:-0.2px;">L</div>
<div class="t" style="left:1519px;top:169px;font-size:12px;line-height:22px;color:#111;font-weight:bold;letter-spacing:-0.2px;">S</div>
<div class="t" style="left:1540px;top:169px;font-size:12px;line-height:22px;color:#111;font-weight:bold;letter-spacing:-0.2px;">Ü</div>
<div class="t" style="left:1560px;top:169px;font-size:12px;line-height:22px;color:#111;font-weight:bold;letter-spacing:-0.2px;">A</div>
<div class="t" style="left:1599px;top:169px;font-size:12px;line-height:22px;color:#111;font-weight:bold;letter-spacing:-0.118px;">Datentyp</div>
<svg class="r" style="left:353px;top:175px;" width="7" height="5" viewBox="0 0 7 5"><path d="M0 4.5 L3.5 0 L7 4.5 Z" fill="#333"/></svg>
<div class="r" style="left:275px;top:191px;width:1423px;height:789px;overflow:hidden;">
<svg width="0" height="0" style="position:absolute"><defs><linearGradient id="bg1" x1="0" y1="0" x2="1" y2="1"><stop offset="0" stop-color="#a8763a"/><stop offset="1" stop-color="#e0b070"/></linearGradient></defs></svg>
<div class="r" style="left:0px;top:0px;width:1423px;height:20px;background:#f2f5f8;"></div>
<svg class="r" style="left:0px;top:0px;" width="20" height="20" viewBox="0 0 20 20"><rect x="2" y="2" width="15.5" height="16" fill="#fff"/><rect x="2" y="6" width="6" height="8" fill="url(#bg1)"/><path d="M9 6.5 H15.5 M13 4.2 L15.8 6.5 L13 8.8" fill="none" stroke="#000" stroke-width="1.3"/><path d="M15.5 6.8 L9.5 13.2" stroke="#e0e0e0" stroke-width="0.6"/><path d="M16 13.5 H9.5 M12 11.2 L9.2 13.5 L12 15.8" fill="none" stroke="#000" stroke-width="1.3"/><rect x="17" y="2.5" width="1.3" height="16" fill="#000"/></svg>
<div class="t" style="left:20px;top:1px;font-size:12px;line-height:20px;color:#1b1b1b;letter-spacing:-0.25px;">4</div>
<div class="t" style="left:93px;top:1px;font-size:12px;line-height:20px;color:#1b1b1b;letter-spacing:-0.25px;">Ausgang A-X</div>
<div class="t" style="left:375px;top:1px;font-size:12px;line-height:20px;color:#1b1b1b;letter-spacing:-0.25px;">Windalarm Nr. 1</div>
<div class="t" style="left:604px;top:1px;font-size:12px;line-height:20px;color:#1b1b1b;letter-spacing:-0.25px;">Sa<i class="u">_</i>Wetterstation Wind</div>
<div class="t" style="left:932px;top:1px;font-size:12px;line-height:20px;color:#1b1b1b;letter-spacing:-0.25px;">0/2/1</div>
<div class="t" style="left:1141px;top:1px;font-size:12px;line-height:20px;color:#1b1b1b;letter-spacing:-0.25px;">1 bit</div>
<div class="t" style="left:1319px;top:1px;font-size:12px;line-height:20px;color:#1b1b1b;letter-spacing:-0.25px;">Alarm</div>
<div class="t" style="left:1200px;top:1px;font-size:12px;line-height:20px;color:#1b1b1b;">K</div>
<div class="t" style="left:1220px;top:1px;font-size:12px;line-height:20px;color:#1b1b1b;">-</div>
<div class="t" style="left:1240px;top:1px;font-size:12px;line-height:20px;color:#1b1b1b;">S</div>
<div class="t" style="left:1260px;top:1px;font-size:12px;line-height:20px;color:#1b1b1b;">Ü</div>
<div class="t" style="left:1280px;top:1px;font-size:12px;line-height:20px;color:#1b1b1b;">A</div>
<div class="r" style="left:0px;top:20px;width:1423px;height:20px;background:#ffffff;"></div>
<svg class="r" style="left:0px;top:20px;" width="20" height="20" viewBox="0 0 20 20"><rect x="2" y="2" width="15.5" height="16" fill="#fff"/><rect x="2" y="6" width="6" height="8" fill="url(#bg1)"/><path d="M9 6.5 H15.5 M13 4.2 L15.8 6.5 L13 8.8" fill="none" stroke="#000" stroke-width="1.3"/><path d="M15.5 6.8 L9.5 13.2" stroke="#e0e0e0" stroke-width="0.6"/><path d="M16 13.5 H9.5 M12 11.2 L9.2 13.5 L12 15.8" fill="none" stroke="#000" stroke-width="1.3"/><rect x="17" y="2.5" width="1.3" height="16" fill="#000"/></svg>
<div class="t" style="left:20px;top:21px;font-size:12px;line-height:20px;color:#1b1b1b;letter-spacing:-0.25px;">7</div>
<div class="t" style="left:93px;top:21px;font-size:12px;line-height:20px;color:#1b1b1b;letter-spacing:-0.25px;">Ausgang A-X</div>
<div class="t" style="left:375px;top:21px;font-size:12px;line-height:20px;color:#1b1b1b;letter-spacing:-0.25px;">Regenalarm</div>
<div class="t" style="left:604px;top:21px;font-size:12px;line-height:20px;color:#1b1b1b;letter-spacing:-0.25px;">Sa<i class="u">_</i>Wetterstation Regen</div>
<div class="t" style="left:932px;top:21px;font-size:12px;line-height:20px;color:#1b1b1b;letter-spacing:-0.25px;">0/2/2</div>
<div class="t" style="left:1141px;top:21px;font-size:12px;line-height:20px;color:#1b1b1b;letter-spacing:-0.25px;">1 bit</div>
<div class="t" style="left:1319px;top:21px;font-size:12px;line-height:20px;color:#1b1b1b;letter-spacing:-0.25px;">Alarm</div>
<div class="t" style="left:1200px;top:21px;font-size:12px;line-height:20px;color:#1b1b1b;">K</div>
<div class="t" style="left:1220px;top:21px;font-size:12px;line-height:20px;color:#1b1b1b;">-</div>
<div class="t" style="left:1240px;top:21px;font-size:12px;line-height:20px;color:#1b1b1b;">S</div>
<div class="t" style="left:1260px;top:21px;font-size:12px;line-height:20px;color:#1b1b1b;">Ü</div>
<div class="t" style="left:1280px;top:21px;font-size:12px;line-height:20px;color:#1b1b1b;">A</div>
<div class="r" style="left:0px;top:40px;width:1423px;height:20px;background:#f2f5f8;"></div>
<svg class="r" style="left:0px;top:40px;" width="20" height="20" viewBox="0 0 20 20"><rect x="2" y="2" width="15.5" height="16" fill="#fff"/><rect x="2" y="6" width="6" height="8" fill="url(#bg1)"/><path d="M9 6.5 H15.5 M13 4.2 L15.8 6.5 L13 8.8" fill="none" stroke="#000" stroke-width="1.3"/><path d="M15.5 6.8 L9.5 13.2" stroke="#e0e0e0" stroke-width="0.6"/><path d="M16 13.5 H9.5 M12 11.2 L9.2 13.5 L12 15.8" fill="none" stroke="#000" stroke-width="1.3"/><rect x="17" y="2.5" width="1.3" height="16" fill="#000"/></svg>
<div class="t" style="left:20px;top:41px;font-size:12px;line-height:20px;color:#1b1b1b;letter-spacing:-0.25px;">8</div>
<div class="t" style="left:93px;top:41px;font-size:12px;line-height:20px;color:#1b1b1b;letter-spacing:-0.25px;">Ausgang A-X</div>
<div class="t" style="left:375px;top:41px;font-size:12px;line-height:20px;color:#1b1b1b;letter-spacing:-0.25px;">Frostalarm</div>
<div class="t" style="left:604px;top:41px;font-size:12px;line-height:20px;color:#1b1b1b;letter-spacing:-0.25px;">Sa<i class="u">_</i>Wetterstation Frostschutz</div>
<div class="t" style="left:932px;top:41px;font-size:12px;line-height:20px;color:#1b1b1b;letter-spacing:-0.25px;">0/2/3</div>
<div class="t" style="left:1141px;top:41px;font-size:12px;line-height:20px;color:#1b1b1b;letter-spacing:-0.25px;">1 bit</div>
<div class="t" style="left:1319px;top:41px;font-size:12px;line-height:20px;color:#1b1b1b;letter-spacing:-0.25px;">Alarm</div>
<div class="t" style="left:1200px;top:41px;font-size:12px;line-height:20px;color:#1b1b1b;">K</div>
<div class="t" style="left:1220px;top:41px;font-size:12px;line-height:20px;color:#1b1b1b;">-</div>
<div class="t" style="left:1240px;top:41px;font-size:12px;line-height:20px;color:#1b1b1b;">S</div>
<div class="t" style="left:1260px;top:41px;font-size:12px;line-height:20px;color:#1b1b1b;">Ü</div>
<div class="t" style="left:1280px;top:41px;font-size:12px;line-height:20px;color:#1b1b1b;">A</div>
<div class="r" style="left:0px;top:60px;width:1423px;height:20px;background:#ffffff;"></div>
<svg class="r" style="left:0px;top:60px;" width="20" height="20" viewBox="0 0 20 20"><rect x="2" y="2" width="15.5" height="16" fill="#fff"/><rect x="2" y="6" width="6" height="8" fill="url(#bg1)"/><path d="M9 6.5 H15.5 M13 4.2 L15.8 6.5 L13 8.8" fill="none" stroke="#000" stroke-width="1.3"/><path d="M15.5 6.8 L9.5 13.2" stroke="#e0e0e0" stroke-width="0.6"/><path d="M16 13.5 H9.5 M12 11.2 L9.2 13.5 L12 15.8" fill="none" stroke="#000" stroke-width="1.3"/><rect x="17" y="2.5" width="1.3" height="16" fill="#000"/></svg>
<div class="t" style="left:20px;top:61px;font-size:12px;line-height:20px;color:#1b1b1b;letter-spacing:-0.25px;">10</div>
<div class="t" style="left:93px;top:61px;font-size:12px;line-height:20px;color:#1b1b1b;letter-spacing:-0.25px;">Ausgang A</div>
<div class="t" style="left:375px;top:61px;font-size:12px;line-height:20px;color:#1b1b1b;letter-spacing:-0.25px;">Behang Auf-Ab fahren</div>
<div class="t" style="left:604px;top:61px;font-size:12px;line-height:20px;color:#1b1b1b;letter-spacing:-0.25px;">Sa<i class="u">_</i>Lz<i class="u">_</i>Fenster Schlafzimmer</div>
<div class="t" style="left:932px;top:61px;font-size:12px;line-height:20px;color:#1b1b1b;letter-spacing:-0.25px;">2/3/11, 0/2/31, 0/2/101</div>
<div class="t" style="left:1141px;top:61px;font-size:12px;line-height:20px;color:#1b1b1b;letter-spacing:-0.25px;">1 bit</div>
<div class="t" style="left:1319px;top:61px;font-size:12px;line-height:20px;color:#1b1b1b;letter-spacing:-0.25px;">Auf/Ab</div>
<div class="t" style="left:1200px;top:61px;font-size:12px;line-height:20px;color:#1b1b1b;">K</div>
<div class="t" style="left:1220px;top:61px;font-size:12px;line-height:20px;color:#1b1b1b;">-</div>
<div class="t" style="left:1240px;top:61px;font-size:12px;line-height:20px;color:#1b1b1b;">S</div>
<div class="t" style="left:1260px;top:61px;font-size:12px;line-height:20px;color:#1b1b1b;">-</div>
<div class="t" style="left:1280px;top:61px;font-size:12px;line-height:20px;color:#1b1b1b;">-</div>
<div class="r" style="left:0px;top:80px;width:1423px;height:20px;background:#f2f5f8;"></div>
<svg class="r" style="left:0px;top:80px;" width="20" height="20" viewBox="0 0 20 20"><rect x="2" y="2" width="15.5" height="16" fill="#fff"/><rect x="2" y="6" width="6" height="8" fill="url(#bg1)"/><path d="M9 6.5 H15.5 M13 4.2 L15.8 6.5 L13 8.8" fill="none" stroke="#000" stroke-width="1.3"/><path d="M15.5 6.8 L9.5 13.2" stroke="#e0e0e0" stroke-width="0.6"/><path d="M16 13.5 H9.5 M12 11.2 L9.2 13.5 L12 15.8" fill="none" stroke="#000" stroke-width="1.3"/><rect x="17" y="2.5" width="1.3" height="16" fill="#000"/></svg>
<div class="t" style="left:20px;top:81px;font-size:12px;line-height:20px;color:#1b1b1b;letter-spacing:-0.25px;">11</div>
<div class="t" style="left:93px;top:81px;font-size:12px;line-height:20px;color:#1b1b1b;letter-spacing:-0.25px;">Ausgang A</div>
<div class="t" style="left:375px;top:81px;font-size:12px;line-height:20px;color:#1b1b1b;letter-spacing:-0.25px;">Lamellenverst./Stopp Auf-Ab</div>
<div class="t" style="left:604px;top:81px;font-size:12px;line-height:20px;color:#1b1b1b;letter-spacing:-0.25px;">Sa<i class="u">_</i>Kz<i class="u">_</i>Fenster Schlafzimmer</div>
<div class="t" style="left:932px;top:81px;font-size:12px;line-height:20px;color:#1b1b1b;letter-spacing:-0.25px;">2/3/12, 0/2/32, 0/2/102</div>
<div class="t" style="left:1141px;top:81px;font-size:12px;line-height:20px;color:#1b1b1b;letter-spacing:-0.25px;">1 bit</div>
<div class="t" style="left:1319px;top:81px;font-size:12px;line-height:20px;color:#1b1b1b;letter-spacing:-0.25px;">Öffnen/Schließen</div>
<div class="t" style="left:1200px;top:81px;font-size:12px;line-height:20px;color:#1b1b1b;">K</div>
<div class="t" style="left:1220px;top:81px;font-size:12px;line-height:20px;color:#1b1b1b;">-</div>
<div class="t" style="left:1240px;top:81px;font-size:12px;line-height:20px;color:#1b1b1b;">S</div>
<div class="t" style="left:1260px;top:81px;font-size:12px;line-height:20px;color:#1b1b1b;">-</div>
<div class="t" style="left:1280px;top:81px;font-size:12px;line-height:20px;color:#1b1b1b;">-</div>
<div class="r" style="left:0px;top:100px;width:1423px;height:20px;background:#ffffff;"></div>
<svg class="r" style="left:0px;top:100px;" width="20" height="20" viewBox="0 0 20 20"><rect x="2" y="2" width="15.5" height="16" fill="#fff"/><rect x="2" y="6" width="6" height="8" fill="url(#bg1)"/><path d="M9 6.5 H15.5 M13 4.2 L15.8 6.5 L13 8.8" fill="none" stroke="#000" stroke-width="1.3"/><path d="M15.5 6.8 L9.5 13.2" stroke="#e0e0e0" stroke-width="0.6"/><path d="M16 13.5 H9.5 M12 11.2 L9.2 13.5 L12 15.8" fill="none" stroke="#000" stroke-width="1.3"/><rect x="17" y="2.5" width="1.3" height="16" fill="#000"/></svg>
<div class="t" style="left:20px;top:101px;font-size:12px;line-height:20px;color:#1b1b1b;letter-spacing:-0.25px;">15</div>
<div class="t" style="left:93px;top:101px;font-size:12px;line-height:20px;color:#1b1b1b;letter-spacing:-0.25px;">Ausgang A</div>
<div class="t" style="left:375px;top:101px;font-size:12px;line-height:20px;color:#1b1b1b;letter-spacing:-0.25px;">Position 1, 2 anfahren</div>
<div class="t" style="left:604px;top:101px;font-size:12px;line-height:20px;color:#1b1b1b;letter-spacing:-0.25px;">Sa<i class="u">_</i>Position<i class="u">_</i>Offen1/Geschlossen2</div>
<div class="t" style="left:932px;top:101px;font-size:12px;line-height:20px;color:#1b1b1b;letter-spacing:-0.25px;">0/5/11</div>
<div class="t" style="left:1141px;top:101px;font-size:12px;line-height:20px;color:#1b1b1b;letter-spacing:-0.25px;">1 bit</div>
<div class="t" style="left:1319px;top:101px;font-size:12px;line-height:20px;color:#1b1b1b;letter-spacing:-0.25px;">Auslöser</div>
<div class="t" style="left:1200px;top:101px;font-size:12px;line-height:20px;color:#1b1b1b;">K</div>
<div class="t" style="left:1220px;top:101px;font-size:12px;line-height:20px;color:#1b1b1b;">-</div>
<div class="t" style="left:1240px;top:101px;font-size:12px;line-height:20px;color:#1b1b1b;">S</div>
<div class="t" style="left:1260px;top:101px;font-size:12px;line-height:20px;color:#1b1b1b;">-</div>
<div class="t" style="left:1280px;top:101px;font-size:12px;line-height:20px;color:#1b1b1b;">-</div>
<div class="r" style="left:0px;top:120px;width:1423px;height:20px;background:#f2f5f8;"></div>
<svg class="r" style="left:0px;top:120px;" width="20" height="20" viewBox="0 0 20 20"><rect x="2" y="2" width="15.5" height="16" fill="#fff"/><rect x="2" y="6" width="6" height="8" fill="url(#bg1)"/><path d="M9 6.5 H15.5 M13 4.2 L15.8 6.5 L13 8.8" fill="none" stroke="#000" stroke-width="1.3"/><path d="M15.5 6.8 L9.5 13.2" stroke="#e0e0e0" stroke-width="0.6"/><path d="M16 13.5 H9.5 M12 11.2 L9.2 13.5 L12 15.8" fill="none" stroke="#000" stroke-width="1.3"/><rect x="17" y="2.5" width="1.3" height="16" fill="#000"/></svg>
<div class="t" style="left:20px;top:121px;font-size:12px;line-height:20px;color:#1b1b1b;letter-spacing:-0.25px;">16</div>
<div class="t" style="left:93px;top:121px;font-size:12px;line-height:20px;color:#1b1b1b;letter-spacing:-0.25px;">Ausgang A</div>
<div class="t" style="left:375px;top:121px;font-size:12px;line-height:20px;color:#1b1b1b;letter-spacing:-0.25px;">Position 3, 4 anfahren</div>
<div class="t" style="left:604px;top:121px;font-size:12px;line-height:20px;color:#1b1b1b;letter-spacing:-0.25px;">Sa<i class="u">_</i>Position<i class="u">_</i>Morgen3/Abend4</div>
<div class="t" style="left:932px;top:121px;font-size:12px;line-height:20px;color:#1b1b1b;letter-spacing:-0.25px;">0/5/12</div>
<div class="t" style="left:1141px;top:121px;font-size:12px;line-height:20px;color:#1b1b1b;letter-spacing:-0.25px;">1 bit</div>
<div class="t" style="left:1319px;top:121px;font-size:12px;line-height:20px;color:#1b1b1b;letter-spacing:-0.25px;">Auslöser</div>
<div class="t" style="left:1200px;top:121px;font-size:12px;line-height:20px;color:#1b1b1b;">K</div>
<div class="t" style="left:1220px;top:121px;font-size:12px;line-height:20px;color:#1b1b1b;">-</div>
<div class="t" style="left:1240px;top:121px;font-size:12px;line-height:20px;color:#1b1b1b;">S</div>
<div class="t" style="left:1260px;top:121px;font-size:12px;line-height:20px;color:#1b1b1b;">-</div>
<div class="t" style="left:1280px;top:121px;font-size:12px;line-height:20px;color:#1b1b1b;">-</div>
<div class="r" style="left:0px;top:140px;width:1423px;height:20px;background:#ffffff;"></div>
<svg class="r" style="left:0px;top:140px;" width="20" height="20" viewBox="0 0 20 20"><rect x="2" y="2" width="15.5" height="16" fill="#fff"/><rect x="2" y="6" width="6" height="8" fill="url(#bg1)"/><path d="M9 6.5 H15.5 M13 4.2 L15.8 6.5 L13 8.8" fill="none" stroke="#000" stroke-width="1.3"/><path d="M15.5 6.8 L9.5 13.2" stroke="#e0e0e0" stroke-width="0.6"/><path d="M16 13.5 H9.5 M12 11.2 L9.2 13.5 L12 15.8" fill="none" stroke="#000" stroke-width="1.3"/><rect x="17" y="2.5" width="1.3" height="16" fill="#000"/></svg>
<div class="t" style="left:20px;top:141px;font-size:12px;line-height:20px;color:#1b1b1b;letter-spacing:-0.25px;">17</div>
<div class="t" style="left:93px;top:141px;font-size:12px;line-height:20px;color:#1b1b1b;letter-spacing:-0.25px;">Ausgang A</div>
<div class="t" style="left:375px;top:141px;font-size:12px;line-height:20px;color:#1b1b1b;letter-spacing:-0.25px;">Position 1, 2 setzen</div>
<div class="t" style="left:1141px;top:141px;font-size:12px;line-height:20px;color:#1b1b1b;letter-spacing:-0.25px;">1 bit</div>
<div class="t" style="left:1200px;top:141px;font-size:12px;line-height:20px;color:#1b1b1b;">K</div>
<div class="t" style="left:1220px;top:141px;font-size:12px;line-height:20px;color:#1b1b1b;">-</div>
<div class="t" style="left:1240px;top:141px;font-size:12px;line-height:20px;color:#1b1b1b;">S</div>
<div class="t" style="left:1260px;top:141px;font-size:12px;line-height:20px;color:#1b1b1b;">-</div>
<div class="t" style="left:1280px;top:141px;font-size:12px;line-height:20px;color:#1b1b1b;">-</div>
<div class="r" style="left:0px;top:160px;width:1423px;height:20px;background:#f2f5f8;"></div>
<svg class="r" style="left:0px;top:160px;" width="20" height="20" viewBox="0 0 20 20"><rect x="2" y="2" width="15.5" height="16" fill="#fff"/><rect x="2" y="6" width="6" height="8" fill="url(#bg1)"/><path d="M9 6.5 H15.5 M13 4.2 L15.8 6.5 L13 8.8" fill="none" stroke="#000" stroke-width="1.3"/><path d="M15.5 6.8 L9.5 13.2" stroke="#e0e0e0" stroke-width="0.6"/><path d="M16 13.5 H9.5 M12 11.2 L9.2 13.5 L12 15.8" fill="none" stroke="#000" stroke-width="1.3"/><rect x="17" y="2.5" width="1.3" height="16" fill="#000"/></svg>
<div class="t" style="left:20px;top:161px;font-size:12px;line-height:20px;color:#1b1b1b;letter-spacing:-0.25px;">18</div>
<div class="t" style="left:93px;top:161px;font-size:12px;line-height:20px;color:#1b1b1b;letter-spacing:-0.25px;">Ausgang A</div>
<div class="t" style="left:375px;top:161px;font-size:12px;line-height:20px;color:#1b1b1b;letter-spacing:-0.25px;">Position 3, 4 setzen</div>
<div class="t" style="left:1141px;top:161px;font-size:12px;line-height:20px;color:#1b1b1b;letter-spacing:-0.25px;">1 bit</div>
<div class="t" style="left:1200px;top:161px;font-size:12px;line-height:20px;color:#1b1b1b;">K</div>
<div class="t" style="left:1220px;top:161px;font-size:12px;line-height:20px;color:#1b1b1b;">-</div>
<div class="t" style="left:1240px;top:161px;font-size:12px;line-height:20px;color:#1b1b1b;">S</div>
<div class="t" style="left:1260px;top:161px;font-size:12px;line-height:20px;color:#1b1b1b;">-</div>
<div class="t" style="left:1280px;top:161px;font-size:12px;line-height:20px;color:#1b1b1b;">-</div>
<div class="r" style="left:0px;top:180px;width:1423px;height:20px;background:#ffffff;"></div>
<svg class="r" style="left:0px;top:180px;" width="20" height="20" viewBox="0 0 20 20"><rect x="2" y="2" width="15.5" height="16" fill="#fff"/><rect x="2" y="6" width="6" height="8" fill="url(#bg1)"/><path d="M9 6.5 H15.5 M13 4.2 L15.8 6.5 L13 8.8" fill="none" stroke="#000" stroke-width="1.3"/><path d="M15.5 6.8 L9.5 13.2" stroke="#e0e0e0" stroke-width="0.6"/><path d="M16 13.5 H9.5 M12 11.2 L9.2 13.5 L12 15.8" fill="none" stroke="#000" stroke-width="1.3"/><rect x="17" y="2.5" width="1.3" height="16" fill="#000"/></svg>
<div class="t" style="left:20px;top:181px;font-size:12px;line-height:20px;color:#1b1b1b;letter-spacing:-0.25px;">21</div>
<div class="t" style="left:93px;top:181px;font-size:12px;line-height:20px;color:#1b1b1b;letter-spacing:-0.25px;">Ausgang A</div>
<div class="t" style="left:375px;top:181px;font-size:12px;line-height:20px;color:#1b1b1b;letter-spacing:-0.25px;">Aktivierung Automatik</div>
<div class="t" style="left:604px;top:181px;font-size:12px;line-height:20px;color:#1b1b1b;letter-spacing:-0.25px;">Sa<i class="u">_</i>Automatik<i class="u">_</i>Beschattung</div>
<div class="t" style="left:932px;top:181px;font-size:12px;line-height:20px;color:#1b1b1b;letter-spacing:-0.25px;">0/5/1</div>
<div class="t" style="left:1141px;top:181px;font-size:12px;line-height:20px;color:#1b1b1b;letter-spacing:-0.25px;">1 bit</div>
<div class="t" style="left:1319px;top:181px;font-size:12px;line-height:20px;color:#1b1b1b;letter-spacing:-0.25px;">Start/Stop</div>
<div class="t" style="left:1200px;top:181px;font-size:12px;line-height:20px;color:#1b1b1b;">K</div>
<div class="t" style="left:1220px;top:181px;font-size:12px;line-height:20px;color:#1b1b1b;">-</div>
<div class="t" style="left:1240px;top:181px;font-size:12px;line-height:20px;color:#1b1b1b;">S</div>
<div class="t" style="left:1260px;top:181px;font-size:12px;line-height:20px;color:#1b1b1b;">Ü</div>
<div class="t" style="left:1280px;top:181px;font-size:12px;line-height:20px;color:#1b1b1b;">A</div>
<div class="r" style="left:0px;top:200px;width:1423px;height:20px;background:#f2f5f8;"></div>
<svg class="r" style="left:0px;top:200px;" width="20" height="20" viewBox="0 0 20 20"><rect x="2" y="2" width="15.5" height="16" fill="#fff"/><rect x="2" y="6" width="6" height="8" fill="url(#bg1)"/><path d="M9 6.5 H15.5 M13 4.2 L15.8 6.5 L13 8.8" fill="none" stroke="#000" stroke-width="1.3"/><path d="M15.5 6.8 L9.5 13.2" stroke="#e0e0e0" stroke-width="0.6"/><path d="M16 13.5 H9.5 M12 11.2 L9.2 13.5 L12 15.8" fill="none" stroke="#000" stroke-width="1.3"/><rect x="17" y="2.5" width="1.3" height="16" fill="#000"/></svg>
<div class="t" style="left:20px;top:201px;font-size:12px;line-height:20px;color:#1b1b1b;letter-spacing:-0.25px;">22</div>
<div class="t" style="left:93px;top:201px;font-size:12px;line-height:20px;color:#1b1b1b;letter-spacing:-0.25px;">Ausgang A</div>
<div class="t" style="left:375px;top:201px;font-size:12px;line-height:20px;color:#1b1b1b;letter-spacing:-0.25px;">Sonne</div>
<div class="t" style="left:604px;top:201px;font-size:12px;line-height:20px;color:#1b1b1b;letter-spacing:-0.25px;">Sa<i class="u">_</i>Helligkeit<i class="u">_</i>Westen</div>
<div class="t" style="left:932px;top:201px;font-size:12px;line-height:20px;color:#1b1b1b;letter-spacing:-0.25px;">0/2/5</div>
<div class="t" style="left:1141px;top:201px;font-size:12px;line-height:20px;color:#1b1b1b;letter-spacing:-0.25px;">1 bit</div>
<div class="t" style="left:1319px;top:201px;font-size:12px;line-height:20px;color:#1b1b1b;letter-spacing:-0.25px;">Auslöser</div>
<div class="t" style="left:1200px;top:201px;font-size:12px;line-height:20px;color:#1b1b1b;">K</div>
<div class="t" style="left:1220px;top:201px;font-size:12px;line-height:20px;color:#1b1b1b;">-</div>
<div class="t" style="left:1240px;top:201px;font-size:12px;line-height:20px;color:#1b1b1b;">S</div>
<div class="t" style="left:1260px;top:201px;font-size:12px;line-height:20px;color:#1b1b1b;">Ü</div>
<div class="t" style="left:1280px;top:201px;font-size:12px;line-height:20px;color:#1b1b1b;">A</div>
<div class="r" style="left:0px;top:220px;width:1423px;height:20px;background:#ffffff;"></div>
<svg class="r" style="left:0px;top:220px;" width="20" height="20" viewBox="0 0 20 20"><rect x="2" y="2" width="15.5" height="16" fill="#fff"/><rect x="2" y="6" width="6" height="8" fill="url(#bg1)"/><path d="M9 6.5 H15.5 M13 4.2 L15.8 6.5 L13 8.8" fill="none" stroke="#000" stroke-width="1.3"/><path d="M15.5 6.8 L9.5 13.2" stroke="#e0e0e0" stroke-width="0.6"/><path d="M16 13.5 H9.5 M12 11.2 L9.2 13.5 L12 15.8" fill="none" stroke="#000" stroke-width="1.3"/><rect x="17" y="2.5" width="1.3" height="16" fill="#000"/></svg>
<div class="t" style="left:20px;top:221px;font-size:12px;line-height:20px;color:#1b1b1b;letter-spacing:-0.25px;">23</div>
<div class="t" style="left:93px;top:221px;font-size:12px;line-height:20px;color:#1b1b1b;letter-spacing:-0.25px;">Ausgang A</div>
<div class="t" style="left:375px;top:221px;font-size:12px;line-height:20px;color:#1b1b1b;letter-spacing:-0.25px;">Sonne: Höhe anfahren [0<i class="e">...</i>255]</div>
<div class="t" style="left:1141px;top:221px;font-size:12px;line-height:20px;color:#1b1b1b;letter-spacing:-0.25px;">1 byte</div>
<div class="t" style="left:1200px;top:221px;font-size:12px;line-height:20px;color:#1b1b1b;">K</div>
<div class="t" style="left:1220px;top:221px;font-size:12px;line-height:20px;color:#1b1b1b;">-</div>
<div class="t" style="left:1240px;top:221px;font-size:12px;line-height:20px;color:#1b1b1b;">S</div>
<div class="t" style="left:1260px;top:221px;font-size:12px;line-height:20px;color:#1b1b1b;">Ü</div>
<div class="t" style="left:1280px;top:221px;font-size:12px;line-height:20px;color:#1b1b1b;">A</div>
<div class="r" style="left:0px;top:240px;width:1423px;height:20px;background:#f2f5f8;"></div>
<svg class="r" style="left:0px;top:240px;" width="20" height="20" viewBox="0 0 20 20"><rect x="2" y="2" width="15.5" height="16" fill="#fff"/><rect x="2" y="6" width="6" height="8" fill="url(#bg1)"/><path d="M9 6.5 H15.5 M13 4.2 L15.8 6.5 L13 8.8" fill="none" stroke="#000" stroke-width="1.3"/><path d="M15.5 6.8 L9.5 13.2" stroke="#e0e0e0" stroke-width="0.6"/><path d="M16 13.5 H9.5 M12 11.2 L9.2 13.5 L12 15.8" fill="none" stroke="#000" stroke-width="1.3"/><rect x="17" y="2.5" width="1.3" height="16" fill="#000"/></svg>
<div class="t" style="left:20px;top:241px;font-size:12px;line-height:20px;color:#1b1b1b;letter-spacing:-0.25px;">24</div>
<div class="t" style="left:93px;top:241px;font-size:12px;line-height:20px;color:#1b1b1b;letter-spacing:-0.25px;">Ausgang A</div>
<div class="t" style="left:375px;top:241px;font-size:12px;line-height:20px;color:#1b1b1b;letter-spacing:-0.25px;">Sonne: Lamelle anfahren 0..255</div>
<div class="t" style="left:1141px;top:241px;font-size:12px;line-height:20px;color:#1b1b1b;letter-spacing:-0.25px;">1 byte</div>
<div class="t" style="left:1200px;top:241px;font-size:12px;line-height:20px;color:#1b1b1b;">K</div>
<div class="t" style="left:1220px;top:241px;font-size:12px;line-height:20px;color:#1b1b1b;">-</div>
<div class="t" style="left:1240px;top:241px;font-size:12px;line-height:20px;color:#1b1b1b;">S</div>
<div class="t" style="left:1260px;top:241px;font-size:12px;line-height:20px;color:#1b1b1b;">Ü</div>
<div class="t" style="left:1280px;top:241px;font-size:12px;line-height:20px;color:#1b1b1b;">A</div>
<div class="r" style="left:0px;top:260px;width:1423px;height:20px;background:#0064b0;"></div>
<svg class="r" style="left:0px;top:260px;" width="20" height="20" viewBox="0 0 20 20"><rect x="2" y="2" width="15.5" height="16" fill="#fff"/><rect x="2" y="6" width="6" height="8" fill="url(#bg1)"/><path d="M9 6.5 H15.5 M13 4.2 L15.8 6.5 L13 8.8" fill="none" stroke="#000" stroke-width="1.3"/><path d="M15.5 6.8 L9.5 13.2" stroke="#e0e0e0" stroke-width="0.6"/><path d="M16 13.5 H9.5 M12 11.2 L9.2 13.5 L12 15.8" fill="none" stroke="#000" stroke-width="1.3"/><rect x="17" y="2.5" width="1.3" height="16" fill="#000"/></svg>
<div class="t" style="left:20px;top:261px;font-size:12px;line-height:20px;color:#fff;letter-spacing:-0.25px;">25</div>
<div class="t" style="left:93px;top:261px;font-size:12px;line-height:20px;color:#fff;letter-spacing:-0.25px;">Ausgang A</div>
<div class="t" style="left:375px;top:261px;font-size:12px;line-height:20px;color:#fff;letter-spacing:-0.25px;">Anwesenheit</div>
<div class="t" style="left:604px;top:261px;font-size:12px;line-height:20px;color:#fff;letter-spacing:-0.25px;">Sa<i class="u">_</i>Präsens<i class="u">_</i>Schlafzimmer</div>
<div class="t" style="left:932px;top:261px;font-size:12px;line-height:20px;color:#fff;letter-spacing:-0.25px;">5/3/11</div>
<div class="t" style="left:1141px;top:261px;font-size:12px;line-height:20px;color:#fff;letter-spacing:-0.25px;">1 bit</div>
<div class="t" style="left:1319px;top:261px;font-size:12px;line-height:20px;color:#fff;letter-spacing:-0.25px;">Schalten</div>
<div class="t" style="left:1200px;top:261px;font-size:12px;line-height:20px;color:#fff;">K</div>
<div class="t" style="left:1220px;top:261px;font-size:12px;line-height:20px;color:#fff;">-</div>
<div class="t" style="left:1240px;top:261px;font-size:12px;line-height:20px;color:#fff;">S</div>
<div class="t" style="left:1260px;top:261px;font-size:12px;line-height:20px;color:#fff;">Ü</div>
<div class="t" style="left:1280px;top:261px;font-size:12px;line-height:20px;color:#fff;">A</div>
<div class="r" style="left:0px;top:280px;width:1423px;height:20px;background:#f2f5f8;"></div>
<svg class="r" style="left:0px;top:280px;" width="20" height="20" viewBox="0 0 20 20"><rect x="2" y="2" width="15.5" height="16" fill="#fff"/><rect x="2" y="6" width="6" height="8" fill="url(#bg1)"/><path d="M9 6.5 H15.5 M13 4.2 L15.8 6.5 L13 8.8" fill="none" stroke="#000" stroke-width="1.3"/><path d="M15.5 6.8 L9.5 13.2" stroke="#e0e0e0" stroke-width="0.6"/><path d="M16 13.5 H9.5 M12 11.2 L9.2 13.5 L12 15.8" fill="none" stroke="#000" stroke-width="1.3"/><rect x="17" y="2.5" width="1.3" height="16" fill="#000"/></svg>
<div class="t" style="left:20px;top:281px;font-size:12px;line-height:20px;color:#1b1b1b;letter-spacing:-0.25px;">26</div>
<div class="t" style="left:93px;top:281px;font-size:12px;line-height:20px;color:#1b1b1b;letter-spacing:-0.25px;">Ausgang A</div>
<div class="t" style="left:375px;top:281px;font-size:12px;line-height:20px;color:#1b1b1b;letter-spacing:-0.25px;">Heizen</div>
<div class="t" style="left:604px;top:281px;font-size:12px;line-height:20px;color:#1b1b1b;letter-spacing:-0.25px;">Sa<i class="u">_</i>Heizen Beschattung</div>
<div class="t" style="left:932px;top:281px;font-size:12px;line-height:20px;color:#1b1b1b;letter-spacing:-0.25px;">0/3/21</div>
<div class="t" style="left:1141px;top:281px;font-size:12px;line-height:20px;color:#1b1b1b;letter-spacing:-0.25px;">1 bit</div>
<div class="t" style="left:1319px;top:281px;font-size:12px;line-height:20px;color:#1b1b1b;letter-spacing:-0.25px;">heizen/kühlen</div>
<div class="t" style="left:1200px;top:281px;font-size:12px;line-height:20px;color:#1b1b1b;">K</div>
<div class="t" style="left:1220px;top:281px;font-size:12px;line-height:20px;color:#1b1b1b;">-</div>
<div class="t" style="left:1240px;top:281px;font-size:12px;line-height:20px;color:#1b1b1b;">S</div>
<div class="t" style="left:1260px;top:281px;font-size:12px;line-height:20px;color:#1b1b1b;">Ü</div>
<div class="t" style="left:1280px;top:281px;font-size:12px;line-height:20px;color:#1b1b1b;">A</div>
<div class="r" style="left:0px;top:300px;width:1423px;height:20px;background:#ffffff;"></div>
<svg class="r" style="left:0px;top:300px;" width="20" height="20" viewBox="0 0 20 20"><rect x="2" y="2" width="15.5" height="16" fill="#fff"/><rect x="2" y="6" width="6" height="8" fill="url(#bg1)"/><path d="M9 6.5 H15.5 M13 4.2 L15.8 6.5 L13 8.8" fill="none" stroke="#000" stroke-width="1.3"/><path d="M15.5 6.8 L9.5 13.2" stroke="#e0e0e0" stroke-width="0.6"/><path d="M16 13.5 H9.5 M12 11.2 L9.2 13.5 L12 15.8" fill="none" stroke="#000" stroke-width="1.3"/><rect x="17" y="2.5" width="1.3" height="16" fill="#000"/></svg>
<div class="t" style="left:20px;top:301px;font-size:12px;line-height:20px;color:#1b1b1b;letter-spacing:-0.25px;">27</div>
<div class="t" style="left:93px;top:301px;font-size:12px;line-height:20px;color:#1b1b1b;letter-spacing:-0.25px;">Ausgang A</div>
<div class="t" style="left:375px;top:301px;font-size:12px;line-height:20px;color:#1b1b1b;letter-spacing:-0.25px;">Kühlen</div>
<div class="t" style="left:604px;top:301px;font-size:12px;line-height:20px;color:#1b1b1b;letter-spacing:-0.25px;">Sa<i class="u">_</i>Kühlen Beschattung</div>
<div class="t" style="left:932px;top:301px;font-size:12px;line-height:20px;color:#1b1b1b;letter-spacing:-0.25px;">0/3/22</div>
<div class="t" style="left:1141px;top:301px;font-size:12px;line-height:20px;color:#1b1b1b;letter-spacing:-0.25px;">1 bit</div>
<div class="t" style="left:1319px;top:301px;font-size:12px;line-height:20px;color:#1b1b1b;letter-spacing:-0.25px;">heizen/kühlen</div>
<div class="t" style="left:1200px;top:301px;font-size:12px;line-height:20px;color:#1b1b1b;">K</div>
<div class="t" style="left:1220px;top:301px;font-size:12px;line-height:20px;color:#1b1b1b;">-</div>
<div class="t" style="left:1240px;top:301px;font-size:12px;line-height:20px;color:#1b1b1b;">S</div>
<div class="t" style="left:1260px;top:301px;font-size:12px;line-height:20px;color:#1b1b1b;">Ü</div>
<div class="t" style="left:1280px;top:301px;font-size:12px;line-height:20px;color:#1b1b1b;">A</div>
<div class="r" style="left:0px;top:320px;width:1423px;height:20px;background:#f2f5f8;"></div>
<svg class="r" style="left:0px;top:320px;" width="20" height="20" viewBox="0 0 20 20"><rect x="2" y="2" width="15.5" height="16" fill="#fff"/><rect x="2" y="6" width="6" height="8" fill="url(#bg1)"/><path d="M9 6.5 H15.5 M13 4.2 L15.8 6.5 L13 8.8" fill="none" stroke="#000" stroke-width="1.3"/><path d="M15.5 6.8 L9.5 13.2" stroke="#e0e0e0" stroke-width="0.6"/><path d="M16 13.5 H9.5 M12 11.2 L9.2 13.5 L12 15.8" fill="none" stroke="#000" stroke-width="1.3"/><rect x="17" y="2.5" width="1.3" height="16" fill="#000"/></svg>
<div class="t" style="left:20px;top:321px;font-size:12px;line-height:20px;color:#1b1b1b;letter-spacing:-0.25px;">28</div>
<div class="t" style="left:93px;top:321px;font-size:12px;line-height:20px;color:#1b1b1b;letter-spacing:-0.25px;">Ausgang A</div>
<div class="t" style="left:375px;top:321px;font-size:12px;line-height:20px;color:#1b1b1b;letter-spacing:-0.25px;">Raumtemperatur empfangen</div>
<div class="t" style="left:604px;top:321px;font-size:12px;line-height:20px;color:#1b1b1b;letter-spacing:-0.25px;">St<i class="u">_</i>We<i class="u">_</i>Raumtemperatur Schlafzimmer</div>
<div class="t" style="left:932px;top:321px;font-size:12px;line-height:20px;color:#1b1b1b;letter-spacing:-0.25px;">3/3/4</div>
<div class="t" style="left:1141px;top:321px;font-size:12px;line-height:20px;color:#1b1b1b;letter-spacing:-0.25px;">2 bytes</div>
<div class="t" style="left:1319px;top:321px;font-size:12px;line-height:20px;color:#1b1b1b;letter-spacing:-0.25px;">Temperatur (°C)</div>
<div class="t" style="left:1200px;top:321px;font-size:12px;line-height:20px;color:#1b1b1b;">K</div>
<div class="t" style="left:1220px;top:321px;font-size:12px;line-height:20px;color:#1b1b1b;">-</div>
<div class="t" style="left:1240px;top:321px;font-size:12px;line-height:20px;color:#1b1b1b;">S</div>
<div class="t" style="left:1260px;top:321px;font-size:12px;line-height:20px;color:#1b1b1b;">Ü</div>
<div class="t" style="left:1280px;top:321px;font-size:12px;line-height:20px;color:#1b1b1b;">A</div>
<div class="r" style="left:0px;top:340px;width:1423px;height:20px;background:#ffffff;"></div>
<svg class="r" style="left:0px;top:340px;" width="20" height="20" viewBox="0 0 20 20"><rect x="2" y="2" width="15.5" height="16" fill="#fff"/><rect x="2" y="6" width="6" height="8" fill="url(#bg1)"/><path d="M9 6.5 H15.5 M13 4.2 L15.8 6.5 L13 8.8" fill="none" stroke="#000" stroke-width="1.3"/><path d="M15.5 6.8 L9.5 13.2" stroke="#e0e0e0" stroke-width="0.6"/><path d="M16 13.5 H9.5 M12 11.2 L9.2 13.5 L12 15.8" fill="none" stroke="#000" stroke-width="1.3"/><rect x="17" y="2.5" width="1.3" height="16" fill="#000"/></svg>
<div class="t" style="left:20px;top:341px;font-size:12px;line-height:20px;color:#1b1b1b;letter-spacing:-0.25px;">33</div>
<div class="t" style="left:93px;top:341px;font-size:12px;line-height:20px;color:#1b1b1b;letter-spacing:-0.25px;">Ausgang A</div>
<div class="t" style="left:375px;top:341px;font-size:12px;line-height:20px;color:#1b1b1b;letter-spacing:-0.25px;">Status Höhe 0<i class="e">...</i>255</div>
<div class="t" style="left:604px;top:341px;font-size:12px;line-height:20px;color:#1b1b1b;letter-spacing:-0.25px;">St<i class="u">_</i>Pos<i class="u">_</i>FensterSchlafzimmer</div>
<div class="t" style="left:932px;top:341px;font-size:12px;line-height:20px;color:#1b1b1b;letter-spacing:-0.25px;">2/3/15</div>
<div class="t" style="left:1141px;top:341px;font-size:12px;line-height:20px;color:#1b1b1b;letter-spacing:-0.25px;">1 byte</div>
<div class="t" style="left:1319px;top:341px;font-size:12px;line-height:20px;color:#1b1b1b;letter-spacing:-0.25px;">Prozent (0..100%)</div>
<div class="t" style="left:1200px;top:341px;font-size:12px;line-height:20px;color:#1b1b1b;">K</div>
<div class="t" style="left:1220px;top:341px;font-size:12px;line-height:20px;color:#1b1b1b;">L</div>
<div class="t" style="left:1240px;top:341px;font-size:12px;line-height:20px;color:#1b1b1b;">-</div>
<div class="t" style="left:1260px;top:341px;font-size:12px;line-height:20px;color:#1b1b1b;">Ü</div>
<div class="t" style="left:1280px;top:341px;font-size:12px;line-height:20px;color:#1b1b1b;">-</div>
<div class="r" style="left:0px;top:360px;width:1423px;height:20px;background:#f2f5f8;"></div>
<svg class="r" style="left:0px;top:360px;" width="20" height="20" viewBox="0 0 20 20"><rect x="2" y="2" width="15.5" height="16" fill="#fff"/><rect x="2" y="6" width="6" height="8" fill="url(#bg1)"/><path d="M9 6.5 H15.5 M13 4.2 L15.8 6.5 L13 8.8" fill="none" stroke="#000" stroke-width="1.3"/><path d="M15.5 6.8 L9.5 13.2" stroke="#e0e0e0" stroke-width="0.6"/><path d="M16 13.5 H9.5 M12 11.2 L9.2 13.5 L12 15.8" fill="none" stroke="#000" stroke-width="1.3"/><rect x="17" y="2.5" width="1.3" height="16" fill="#000"/></svg>
<div class="t" style="left:20px;top:361px;font-size:12px;line-height:20px;color:#1b1b1b;letter-spacing:-0.25px;">34</div>
<div class="t" style="left:93px;top:361px;font-size:12px;line-height:20px;color:#1b1b1b;letter-spacing:-0.25px;">Ausgang A</div>
<div class="t" style="left:375px;top:361px;font-size:12px;line-height:20px;color:#1b1b1b;letter-spacing:-0.25px;">Status Lamelle 0<i class="e">...</i>255</div>
<div class="t" style="left:604px;top:361px;font-size:12px;line-height:20px;color:#1b1b1b;letter-spacing:-0.25px;">St<i class="u">_</i>Lam.<i class="u">_</i>Fenster Schlafzimmer</div>
<div class="t" style="left:932px;top:361px;font-size:12px;line-height:20px;color:#1b1b1b;letter-spacing:-0.25px;">2/3/16</div>
<div class="t" style="left:1141px;top:361px;font-size:12px;line-height:20px;color:#1b1b1b;letter-spacing:-0.25px;">1 byte</div>
<div class="t" style="left:1319px;top:361px;font-size:12px;line-height:20px;color:#1b1b1b;letter-spacing:-0.25px;">Prozent (0..100%)</div>
<div class="t" style="left:1200px;top:361px;font-size:12px;line-height:20px;color:#1b1b1b;">K</div>
<div class="t" style="left:1220px;top:361px;font-size:12px;line-height:20px;color:#1b1b1b;">L</div>
<div class="t" style="left:1240px;top:361px;font-size:12px;line-height:20px;color:#1b1b1b;">-</div>
<div class="t" style="left:1260px;top:361px;font-size:12px;line-height:20px;color:#1b1b1b;">Ü</div>
<div class="t" style="left:1280px;top:361px;font-size:12px;line-height:20px;color:#1b1b1b;">-</div>
<div class="r" style="left:0px;top:380px;width:1423px;height:20px;background:#ffffff;"></div>
<svg class="r" style="left:0px;top:380px;" width="20" height="20" viewBox="0 0 20 20"><rect x="2" y="2" width="15.5" height="16" fill="#fff"/><rect x="2" y="6" width="6" height="8" fill="url(#bg1)"/><path d="M9 6.5 H15.5 M13 4.2 L15.8 6.5 L13 8.8" fill="none" stroke="#000" stroke-width="1.3"/><path d="M15.5 6.8 L9.5 13.2" stroke="#e0e0e0" stroke-width="0.6"/><path d="M16 13.5 H9.5 M12 11.2 L9.2 13.5 L12 15.8" fill="none" stroke="#000" stroke-width="1.3"/><rect x="17" y="2.5" width="1.3" height="16" fill="#000"/></svg>
<div class="t" style="left:20px;top:381px;font-size:12px;line-height:20px;color:#1b1b1b;letter-spacing:-0.25px;">35</div>
<div class="t" style="left:93px;top:381px;font-size:12px;line-height:20px;color:#1b1b1b;letter-spacing:-0.25px;">Ausgang A</div>
<div class="t" style="left:375px;top:381px;font-size:12px;line-height:20px;color:#1b1b1b;letter-spacing:-0.25px;">Status Endlage oben</div>
<div class="t" style="left:604px;top:381px;font-size:12px;line-height:20px;color:#1b1b1b;letter-spacing:-0.25px;">St<i class="u">_</i>Entlage<i class="u">_</i>Oben Fenster SZ</div>
<div class="t" style="left:932px;top:381px;font-size:12px;line-height:20px;color:#1b1b1b;letter-spacing:-0.25px;">2/3/13</div>
<div class="t" style="left:1141px;top:381px;font-size:12px;line-height:20px;color:#1b1b1b;letter-spacing:-0.25px;">1 bit</div>
<div class="t" style="left:1319px;top:381px;font-size:12px;line-height:20px;color:#1b1b1b;letter-spacing:-0.25px;">Schalten</div>
<div class="t" style="left:1200px;top:381px;font-size:12px;line-height:20px;color:#1b1b1b;">K</div>
<div class="t" style="left:1220px;top:381px;font-size:12px;line-height:20px;color:#1b1b1b;">L</div>
<div class="t" style="left:1240px;top:381px;font-size:12px;line-height:20px;color:#1b1b1b;">-</div>
<div class="t" style="left:1260px;top:381px;font-size:12px;line-height:20px;color:#1b1b1b;">Ü</div>
<div class="t" style="left:1280px;top:381px;font-size:12px;line-height:20px;color:#1b1b1b;">-</div>
<div class="r" style="left:0px;top:400px;width:1423px;height:20px;background:#f2f5f8;"></div>
<svg class="r" style="left:0px;top:400px;" width="20" height="20" viewBox="0 0 20 20"><rect x="2" y="2" width="15.5" height="16" fill="#fff"/><rect x="2" y="6" width="6" height="8" fill="url(#bg1)"/><path d="M9 6.5 H15.5 M13 4.2 L15.8 6.5 L13 8.8" fill="none" stroke="#000" stroke-width="1.3"/><path d="M15.5 6.8 L9.5 13.2" stroke="#e0e0e0" stroke-width="0.6"/><path d="M16 13.5 H9.5 M12 11.2 L9.2 13.5 L12 15.8" fill="none" stroke="#000" stroke-width="1.3"/><rect x="17" y="2.5" width="1.3" height="16" fill="#000"/></svg>
<div class="t" style="left:20px;top:401px;font-size:12px;line-height:20px;color:#1b1b1b;letter-spacing:-0.25px;">36</div>
<div class="t" style="left:93px;top:401px;font-size:12px;line-height:20px;color:#1b1b1b;letter-spacing:-0.25px;">Ausgang A</div>
<div class="t" style="left:375px;top:401px;font-size:12px;line-height:20px;color:#1b1b1b;letter-spacing:-0.25px;">Status Endlage unten</div>
<div class="t" style="left:604px;top:401px;font-size:12px;line-height:20px;color:#1b1b1b;letter-spacing:-0.25px;">St<i class="u">_</i>Entlage<i class="u">_</i>Unten Fenster SZ</div>
<div class="t" style="left:932px;top:401px;font-size:12px;line-height:20px;color:#1b1b1b;letter-spacing:-0.25px;">2/3/14</div>
<div class="t" style="left:1141px;top:401px;font-size:12px;line-height:20px;color:#1b1b1b;letter-spacing:-0.25px;">1 bit</div>
<div class="t" style="left:1319px;top:401px;font-size:12px;line-height:20px;color:#1b1b1b;letter-spacing:-0.25px;">Schalten</div>
<div class="t" style="left:1200px;top:401px;font-size:12px;line-height:20px;color:#1b1b1b;">K</div>
<div class="t" style="left:1220px;top:401px;font-size:12px;line-height:20px;color:#1b1b1b;">L</div>
<div class="t" style="left:1240px;top:401px;font-size:12px;line-height:20px;color:#1b1b1b;">-</div>
<div class="t" style="left:1260px;top:401px;font-size:12px;line-height:20px;color:#1b1b1b;">Ü</div>
<div class="t" style="left:1280px;top:401px;font-size:12px;line-height:20px;color:#1b1b1b;">-</div>
<div class="r" style="left:0px;top:420px;width:1423px;height:20px;background:#ffffff;"></div>
<svg class="r" style="left:0px;top:420px;" width="20" height="20" viewBox="0 0 20 20"><rect x="2" y="2" width="15.5" height="16" fill="#fff"/><rect x="2" y="6" width="6" height="8" fill="url(#bg1)"/><path d="M9 6.5 H15.5 M13 4.2 L15.8 6.5 L13 8.8" fill="none" stroke="#000" stroke-width="1.3"/><path d="M15.5 6.8 L9.5 13.2" stroke="#e0e0e0" stroke-width="0.6"/><path d="M16 13.5 H9.5 M12 11.2 L9.2 13.5 L12 15.8" fill="none" stroke="#000" stroke-width="1.3"/><rect x="17" y="2.5" width="1.3" height="16" fill="#000"/></svg>
<div class="t" style="left:20px;top:421px;font-size:12px;line-height:20px;color:#1b1b1b;letter-spacing:-0.25px;">38</div>
<div class="t" style="left:93px;top:421px;font-size:12px;line-height:20px;color:#1b1b1b;letter-spacing:-0.25px;">Ausgang A</div>
<div class="t" style="left:375px;top:421px;font-size:12px;line-height:20px;color:#1b1b1b;letter-spacing:-0.25px;">Status Automatik</div>
<div class="t" style="left:604px;top:421px;font-size:12px;line-height:20px;color:#1b1b1b;letter-spacing:-0.25px;">St<i class="u">_</i>Sa<i class="u">_</i>Automatik Beschattung</div>
<div class="t" style="left:932px;top:421px;font-size:12px;line-height:20px;color:#1b1b1b;letter-spacing:-0.25px;">0/5/2</div>
<div class="t" style="left:1141px;top:421px;font-size:12px;line-height:20px;color:#1b1b1b;letter-spacing:-0.25px;">1 bit</div>
<div class="t" style="left:1319px;top:421px;font-size:12px;line-height:20px;color:#1b1b1b;letter-spacing:-0.25px;">Status</div>
<div class="t" style="left:1200px;top:421px;font-size:12px;line-height:20px;color:#1b1b1b;">K</div>
<div class="t" style="left:1220px;top:421px;font-size:12px;line-height:20px;color:#1b1b1b;">L</div>
<div class="t" style="left:1240px;top:421px;font-size:12px;line-height:20px;color:#1b1b1b;">-</div>
<div class="t" style="left:1260px;top:421px;font-size:12px;line-height:20px;color:#1b1b1b;">Ü</div>
<div class="t" style="left:1280px;top:421px;font-size:12px;line-height:20px;color:#1b1b1b;">-</div>
<div class="r" style="left:0px;top:440px;width:1423px;height:20px;background:#f2f5f8;"></div>
<svg class="r" style="left:0px;top:440px;" width="20" height="20" viewBox="0 0 20 20"><rect x="2" y="2" width="15.5" height="16" fill="#fff"/><rect x="2" y="6" width="6" height="8" fill="url(#bg1)"/><path d="M9 6.5 H15.5 M13 4.2 L15.8 6.5 L13 8.8" fill="none" stroke="#000" stroke-width="1.3"/><path d="M15.5 6.8 L9.5 13.2" stroke="#e0e0e0" stroke-width="0.6"/><path d="M16 13.5 H9.5 M12 11.2 L9.2 13.5 L12 15.8" fill="none" stroke="#000" stroke-width="1.3"/><rect x="17" y="2.5" width="1.3" height="16" fill="#000"/></svg>
<div class="t" style="left:20px;top:441px;font-size:12px;line-height:20px;color:#1b1b1b;letter-spacing:-0.25px;">40</div>
<div class="t" style="left:93px;top:441px;font-size:12px;line-height:20px;color:#1b1b1b;letter-spacing:-0.25px;">Ausgang B</div>
<div class="t" style="left:375px;top:441px;font-size:12px;line-height:20px;color:#1b1b1b;letter-spacing:-0.25px;">Behang Auf-Ab fahren</div>
<div class="t" style="left:604px;top:441px;font-size:12px;line-height:20px;color:#1b1b1b;letter-spacing:-0.25px;">Sa<i class="u">_</i>Lz<i class="u">_</i>Tür Schrankraum</div>
<div class="t" style="left:932px;top:441px;font-size:12px;line-height:20px;color:#1b1b1b;letter-spacing:-0.25px;">2/3/1, 0/2/31, 0/2/101</div>
<div class="t" style="left:1141px;top:441px;font-size:12px;line-height:20px;color:#1b1b1b;letter-spacing:-0.25px;">1 bit</div>
<div class="t" style="left:1319px;top:441px;font-size:12px;line-height:20px;color:#1b1b1b;letter-spacing:-0.25px;">Auf/Ab</div>
<div class="t" style="left:1200px;top:441px;font-size:12px;line-height:20px;color:#1b1b1b;">K</div>
<div class="t" style="left:1220px;top:441px;font-size:12px;line-height:20px;color:#1b1b1b;">-</div>
<div class="t" style="left:1240px;top:441px;font-size:12px;line-height:20px;color:#1b1b1b;">S</div>
<div class="t" style="left:1260px;top:441px;font-size:12px;line-height:20px;color:#1b1b1b;">-</div>
<div class="t" style="left:1280px;top:441px;font-size:12px;line-height:20px;color:#1b1b1b;">-</div>
<div class="r" style="left:0px;top:460px;width:1423px;height:20px;background:#ffffff;"></div>
<svg class="r" style="left:0px;top:460px;" width="20" height="20" viewBox="0 0 20 20"><rect x="2" y="2" width="15.5" height="16" fill="#fff"/><rect x="2" y="6" width="6" height="8" fill="url(#bg1)"/><path d="M9 6.5 H15.5 M13 4.2 L15.8 6.5 L13 8.8" fill="none" stroke="#000" stroke-width="1.3"/><path d="M15.5 6.8 L9.5 13.2" stroke="#e0e0e0" stroke-width="0.6"/><path d="M16 13.5 H9.5 M12 11.2 L9.2 13.5 L12 15.8" fill="none" stroke="#000" stroke-width="1.3"/><rect x="17" y="2.5" width="1.3" height="16" fill="#000"/></svg>
<div class="t" style="left:20px;top:461px;font-size:12px;line-height:20px;color:#1b1b1b;letter-spacing:-0.25px;">41</div>
<div class="t" style="left:93px;top:461px;font-size:12px;line-height:20px;color:#1b1b1b;letter-spacing:-0.25px;">Ausgang B</div>
<div class="t" style="left:375px;top:461px;font-size:12px;line-height:20px;color:#1b1b1b;letter-spacing:-0.25px;">Lamellenverst./Stopp Auf-Ab</div>
<div class="t" style="left:604px;top:461px;font-size:12px;line-height:20px;color:#1b1b1b;letter-spacing:-0.25px;">Sa<i class="u">_</i>Kz<i class="u">_</i>Tür Schrankraum</div>
<div class="t" style="left:932px;top:461px;font-size:12px;line-height:20px;color:#1b1b1b;letter-spacing:-0.25px;">2/3/2, 0/2/32, 0/2/102</div>
<div class="t" style="left:1141px;top:461px;font-size:12px;line-height:20px;color:#1b1b1b;letter-spacing:-0.25px;">1 bit</div>
<div class="t" style="left:1319px;top:461px;font-size:12px;line-height:20px;color:#1b1b1b;letter-spacing:-0.25px;">Öffnen/Schließen</div>
<div class="t" style="left:1200px;top:461px;font-size:12px;line-height:20px;color:#1b1b1b;">K</div>
<div class="t" style="left:1220px;top:461px;font-size:12px;line-height:20px;color:#1b1b1b;">-</div>
<div class="t" style="left:1240px;top:461px;font-size:12px;line-height:20px;color:#1b1b1b;">S</div>
<div class="t" style="left:1260px;top:461px;font-size:12px;line-height:20px;color:#1b1b1b;">-</div>
<div class="t" style="left:1280px;top:461px;font-size:12px;line-height:20px;color:#1b1b1b;">-</div>
<div class="r" style="left:0px;top:480px;width:1423px;height:20px;background:#f2f5f8;"></div>
<svg class="r" style="left:0px;top:480px;" width="20" height="20" viewBox="0 0 20 20"><rect x="2" y="2" width="15.5" height="16" fill="#fff"/><rect x="2" y="6" width="6" height="8" fill="url(#bg1)"/><path d="M9 6.5 H15.5 M13 4.2 L15.8 6.5 L13 8.8" fill="none" stroke="#000" stroke-width="1.3"/><path d="M15.5 6.8 L9.5 13.2" stroke="#e0e0e0" stroke-width="0.6"/><path d="M16 13.5 H9.5 M12 11.2 L9.2 13.5 L12 15.8" fill="none" stroke="#000" stroke-width="1.3"/><rect x="17" y="2.5" width="1.3" height="16" fill="#000"/></svg>
<div class="t" style="left:20px;top:481px;font-size:12px;line-height:20px;color:#1b1b1b;letter-spacing:-0.25px;">45</div>
<div class="t" style="left:93px;top:481px;font-size:12px;line-height:20px;color:#1b1b1b;letter-spacing:-0.25px;">Ausgang B</div>
<div class="t" style="left:375px;top:481px;font-size:12px;line-height:20px;color:#1b1b1b;letter-spacing:-0.25px;">Position 1, 2 anfahren</div>
<div class="t" style="left:604px;top:481px;font-size:12px;line-height:20px;color:#1b1b1b;letter-spacing:-0.25px;">Sa<i class="u">_</i>Position<i class="u">_</i>Offen1/Geschlossen2</div>
<div class="t" style="left:932px;top:481px;font-size:12px;line-height:20px;color:#1b1b1b;letter-spacing:-0.25px;">0/5/11</div>
<div class="t" style="left:1141px;top:481px;font-size:12px;line-height:20px;color:#1b1b1b;letter-spacing:-0.25px;">1 bit</div>
<div class="t" style="left:1319px;top:481px;font-size:12px;line-height:20px;color:#1b1b1b;letter-spacing:-0.25px;">Auslöser</div>
<div class="t" style="left:1200px;top:481px;font-size:12px;line-height:20px;color:#1b1b1b;">K</div>
<div class="t" style="left:1220px;top:481px;font-size:12px;line-height:20px;color:#1b1b1b;">-</div>
<div class="t" style="left:1240px;top:481px;font-size:12px;line-height:20px;color:#1b1b1b;">S</div>
<div class="t" style="left:1260px;top:481px;font-size:12px;line-height:20px;color:#1b1b1b;">-</div>
<div class="t" style="left:1280px;top:481px;font-size:12px;line-height:20px;color:#1b1b1b;">-</div>
<div class="r" style="left:0px;top:500px;width:1423px;height:20px;background:#ffffff;"></div>
<svg class="r" style="left:0px;top:500px;" width="20" height="20" viewBox="0 0 20 20"><rect x="2" y="2" width="15.5" height="16" fill="#fff"/><rect x="2" y="6" width="6" height="8" fill="url(#bg1)"/><path d="M9 6.5 H15.5 M13 4.2 L15.8 6.5 L13 8.8" fill="none" stroke="#000" stroke-width="1.3"/><path d="M15.5 6.8 L9.5 13.2" stroke="#e0e0e0" stroke-width="0.6"/><path d="M16 13.5 H9.5 M12 11.2 L9.2 13.5 L12 15.8" fill="none" stroke="#000" stroke-width="1.3"/><rect x="17" y="2.5" width="1.3" height="16" fill="#000"/></svg>
<div class="t" style="left:20px;top:501px;font-size:12px;line-height:20px;color:#1b1b1b;letter-spacing:-0.25px;">46</div>
<div class="t" style="left:93px;top:501px;font-size:12px;line-height:20px;color:#1b1b1b;letter-spacing:-0.25px;">Ausgang B</div>
<div class="t" style="left:375px;top:501px;font-size:12px;line-height:20px;color:#1b1b1b;letter-spacing:-0.25px;">Position 3, 4 anfahren</div>
<div class="t" style="left:604px;top:501px;font-size:12px;line-height:20px;color:#1b1b1b;letter-spacing:-0.25px;">Sa<i class="u">_</i>Position<i class="u">_</i>Morgen3/Abend4</div>
<div class="t" style="left:932px;top:501px;font-size:12px;line-height:20px;color:#1b1b1b;letter-spacing:-0.25px;">0/5/12</div>
<div class="t" style="left:1141px;top:501px;font-size:12px;line-height:20px;color:#1b1b1b;letter-spacing:-0.25px;">1 bit</div>
<div class="t" style="left:1319px;top:501px;font-size:12px;line-height:20px;color:#1b1b1b;letter-spacing:-0.25px;">Auslöser</div>
<div class="t" style="left:1200px;top:501px;font-size:12px;line-height:20px;color:#1b1b1b;">K</div>
<div class="t" style="left:1220px;top:501px;font-size:12px;line-height:20px;color:#1b1b1b;">-</div>
<div class="t" style="left:1240px;top:501px;font-size:12px;line-height:20px;color:#1b1b1b;">S</div>
<div class="t" style="left:1260px;top:501px;font-size:12px;line-height:20px;color:#1b1b1b;">-</div>
<div class="t" style="left:1280px;top:501px;font-size:12px;line-height:20px;color:#1b1b1b;">-</div>
<div class="r" style="left:0px;top:520px;width:1423px;height:20px;background:#f2f5f8;"></div>
<svg class="r" style="left:0px;top:520px;" width="20" height="20" viewBox="0 0 20 20"><rect x="2" y="2" width="15.5" height="16" fill="#fff"/><rect x="2" y="6" width="6" height="8" fill="url(#bg1)"/><path d="M9 6.5 H15.5 M13 4.2 L15.8 6.5 L13 8.8" fill="none" stroke="#000" stroke-width="1.3"/><path d="M15.5 6.8 L9.5 13.2" stroke="#e0e0e0" stroke-width="0.6"/><path d="M16 13.5 H9.5 M12 11.2 L9.2 13.5 L12 15.8" fill="none" stroke="#000" stroke-width="1.3"/><rect x="17" y="2.5" width="1.3" height="16" fill="#000"/></svg>
<div class="t" style="left:20px;top:521px;font-size:12px;line-height:20px;color:#1b1b1b;letter-spacing:-0.25px;">47</div>
<div class="t" style="left:93px;top:521px;font-size:12px;line-height:20px;color:#1b1b1b;letter-spacing:-0.25px;">Ausgang B</div>
<div class="t" style="left:375px;top:521px;font-size:12px;line-height:20px;color:#1b1b1b;letter-spacing:-0.25px;">Position 1, 2 setzen</div>
<div class="t" style="left:1141px;top:521px;font-size:12px;line-height:20px;color:#1b1b1b;letter-spacing:-0.25px;">1 bit</div>
<div class="t" style="left:1200px;top:521px;font-size:12px;line-height:20px;color:#1b1b1b;">K</div>
<div class="t" style="left:1220px;top:521px;font-size:12px;line-height:20px;color:#1b1b1b;">-</div>
<div class="t" style="left:1240px;top:521px;font-size:12px;line-height:20px;color:#1b1b1b;">S</div>
<div class="t" style="left:1260px;top:521px;font-size:12px;line-height:20px;color:#1b1b1b;">-</div>
<div class="t" style="left:1280px;top:521px;font-size:12px;line-height:20px;color:#1b1b1b;">-</div>
<div class="r" style="left:0px;top:540px;width:1423px;height:20px;background:#ffffff;"></div>
<svg class="r" style="left:0px;top:540px;" width="20" height="20" viewBox="0 0 20 20"><rect x="2" y="2" width="15.5" height="16" fill="#fff"/><rect x="2" y="6" width="6" height="8" fill="url(#bg1)"/><path d="M9 6.5 H15.5 M13 4.2 L15.8 6.5 L13 8.8" fill="none" stroke="#000" stroke-width="1.3"/><path d="M15.5 6.8 L9.5 13.2" stroke="#e0e0e0" stroke-width="0.6"/><path d="M16 13.5 H9.5 M12 11.2 L9.2 13.5 L12 15.8" fill="none" stroke="#000" stroke-width="1.3"/><rect x="17" y="2.5" width="1.3" height="16" fill="#000"/></svg>
<div class="t" style="left:20px;top:541px;font-size:12px;line-height:20px;color:#1b1b1b;letter-spacing:-0.25px;">48</div>
<div class="t" style="left:93px;top:541px;font-size:12px;line-height:20px;color:#1b1b1b;letter-spacing:-0.25px;">Ausgang B</div>
<div class="t" style="left:375px;top:541px;font-size:12px;line-height:20px;color:#1b1b1b;letter-spacing:-0.25px;">Position 3, 4 setzen</div>
<div class="t" style="left:1141px;top:541px;font-size:12px;line-height:20px;color:#1b1b1b;letter-spacing:-0.25px;">1 bit</div>
<div class="t" style="left:1200px;top:541px;font-size:12px;line-height:20px;color:#1b1b1b;">K</div>
<div class="t" style="left:1220px;top:541px;font-size:12px;line-height:20px;color:#1b1b1b;">-</div>
<div class="t" style="left:1240px;top:541px;font-size:12px;line-height:20px;color:#1b1b1b;">S</div>
<div class="t" style="left:1260px;top:541px;font-size:12px;line-height:20px;color:#1b1b1b;">-</div>
<div class="t" style="left:1280px;top:541px;font-size:12px;line-height:20px;color:#1b1b1b;">-</div>
<div class="r" style="left:0px;top:560px;width:1423px;height:20px;background:#f2f5f8;"></div>
<svg class="r" style="left:0px;top:560px;" width="20" height="20" viewBox="0 0 20 20"><rect x="2" y="2" width="15.5" height="16" fill="#fff"/><rect x="2" y="6" width="6" height="8" fill="url(#bg1)"/><path d="M9 6.5 H15.5 M13 4.2 L15.8 6.5 L13 8.8" fill="none" stroke="#000" stroke-width="1.3"/><path d="M15.5 6.8 L9.5 13.2" stroke="#e0e0e0" stroke-width="0.6"/><path d="M16 13.5 H9.5 M12 11.2 L9.2 13.5 L12 15.8" fill="none" stroke="#000" stroke-width="1.3"/><rect x="17" y="2.5" width="1.3" height="16" fill="#000"/></svg>
<div class="t" style="left:20px;top:561px;font-size:12px;line-height:20px;color:#1b1b1b;letter-spacing:-0.25px;">51</div>
<div class="t" style="left:93px;top:561px;font-size:12px;line-height:20px;color:#1b1b1b;letter-spacing:-0.25px;">Ausgang B</div>
<div class="t" style="left:375px;top:561px;font-size:12px;line-height:20px;color:#1b1b1b;letter-spacing:-0.25px;">Aktivierung Automatik</div>
<div class="t" style="left:604px;top:561px;font-size:12px;line-height:20px;color:#1b1b1b;letter-spacing:-0.25px;">Sa<i class="u">_</i>Automatik<i class="u">_</i>Beschattung</div>
<div class="t" style="left:932px;top:561px;font-size:12px;line-height:20px;color:#1b1b1b;letter-spacing:-0.25px;">0/5/1</div>
<div class="t" style="left:1141px;top:561px;font-size:12px;line-height:20px;color:#1b1b1b;letter-spacing:-0.25px;">1 bit</div>
<div class="t" style="left:1319px;top:561px;font-size:12px;line-height:20px;color:#1b1b1b;letter-spacing:-0.25px;">Start/Stop</div>
<div class="t" style="left:1200px;top:561px;font-size:12px;line-height:20px;color:#1b1b1b;">K</div>
<div class="t" style="left:1220px;top:561px;font-size:12px;line-height:20px;color:#1b1b1b;">-</div>
<div class="t" style="left:1240px;top:561px;font-size:12px;line-height:20px;color:#1b1b1b;">S</div>
<div class="t" style="left:1260px;top:561px;font-size:12px;line-height:20px;color:#1b1b1b;">Ü</div>
<div class="t" style="left:1280px;top:561px;font-size:12px;line-height:20px;color:#1b1b1b;">A</div>
<div class="r" style="left:0px;top:580px;width:1423px;height:20px;background:#ffffff;"></div>
<svg class="r" style="left:0px;top:580px;" width="20" height="20" viewBox="0 0 20 20"><rect x="2" y="2" width="15.5" height="16" fill="#fff"/><rect x="2" y="6" width="6" height="8" fill="url(#bg1)"/><path d="M9 6.5 H15.5 M13 4.2 L15.8 6.5 L13 8.8" fill="none" stroke="#000" stroke-width="1.3"/><path d="M15.5 6.8 L9.5 13.2" stroke="#e0e0e0" stroke-width="0.6"/><path d="M16 13.5 H9.5 M12 11.2 L9.2 13.5 L12 15.8" fill="none" stroke="#000" stroke-width="1.3"/><rect x="17" y="2.5" width="1.3" height="16" fill="#000"/></svg>
<div class="t" style="left:20px;top:581px;font-size:12px;line-height:20px;color:#1b1b1b;letter-spacing:-0.25px;">52</div>
<div class="t" style="left:93px;top:581px;font-size:12px;line-height:20px;color:#1b1b1b;letter-spacing:-0.25px;">Ausgang B</div>
<div class="t" style="left:375px;top:581px;font-size:12px;line-height:20px;color:#1b1b1b;letter-spacing:-0.25px;">Sonne</div>
<div class="t" style="left:604px;top:581px;font-size:12px;line-height:20px;color:#1b1b1b;letter-spacing:-0.25px;">Sa<i class="u">_</i>Helligkeit<i class="u">_</i>Westen</div>
<div class="t" style="left:932px;top:581px;font-size:12px;line-height:20px;color:#1b1b1b;letter-spacing:-0.25px;">0/2/5</div>
<div class="t" style="left:1141px;top:581px;font-size:12px;line-height:20px;color:#1b1b1b;letter-spacing:-0.25px;">1 bit</div>
<div class="t" style="left:1319px;top:581px;font-size:12px;line-height:20px;color:#1b1b1b;letter-spacing:-0.25px;">Auslöser</div>
<div class="t" style="left:1200px;top:581px;font-size:12px;line-height:20px;color:#1b1b1b;">K</div>
<div class="t" style="left:1220px;top:581px;font-size:12px;line-height:20px;color:#1b1b1b;">-</div>
<div class="t" style="left:1240px;top:581px;font-size:12px;line-height:20px;color:#1b1b1b;">S</div>
<div class="t" style="left:1260px;top:581px;font-size:12px;line-height:20px;color:#1b1b1b;">Ü</div>
<div class="t" style="left:1280px;top:581px;font-size:12px;line-height:20px;color:#1b1b1b;">A</div>
<div class="r" style="left:0px;top:600px;width:1423px;height:20px;background:#f2f5f8;"></div>
<svg class="r" style="left:0px;top:600px;" width="20" height="20" viewBox="0 0 20 20"><rect x="2" y="2" width="15.5" height="16" fill="#fff"/><rect x="2" y="6" width="6" height="8" fill="url(#bg1)"/><path d="M9 6.5 H15.5 M13 4.2 L15.8 6.5 L13 8.8" fill="none" stroke="#000" stroke-width="1.3"/><path d="M15.5 6.8 L9.5 13.2" stroke="#e0e0e0" stroke-width="0.6"/><path d="M16 13.5 H9.5 M12 11.2 L9.2 13.5 L12 15.8" fill="none" stroke="#000" stroke-width="1.3"/><rect x="17" y="2.5" width="1.3" height="16" fill="#000"/></svg>
<div class="t" style="left:20px;top:601px;font-size:12px;line-height:20px;color:#1b1b1b;letter-spacing:-0.25px;">53</div>
<div class="t" style="left:93px;top:601px;font-size:12px;line-height:20px;color:#1b1b1b;letter-spacing:-0.25px;">Ausgang B</div>
<div class="t" style="left:375px;top:601px;font-size:12px;line-height:20px;color:#1b1b1b;letter-spacing:-0.25px;">Sonne: Höhe anfahren [0<i class="e">...</i>255]</div>
<div class="t" style="left:1141px;top:601px;font-size:12px;line-height:20px;color:#1b1b1b;letter-spacing:-0.25px;">1 byte</div>
<div class="t" style="left:1200px;top:601px;font-size:12px;line-height:20px;color:#1b1b1b;">K</div>
<div class="t" style="left:1220px;top:601px;font-size:12px;line-height:20px;color:#1b1b1b;">-</div>
<div class="t" style="left:1240px;top:601px;font-size:12px;line-height:20px;color:#1b1b1b;">S</div>
<div class="t" style="left:1260px;top:601px;font-size:12px;line-height:20px;color:#1b1b1b;">Ü</div>
<div class="t" style="left:1280px;top:601px;font-size:12px;line-height:20px;color:#1b1b1b;">A</div>
<div class="r" style="left:0px;top:620px;width:1423px;height:20px;background:#ffffff;"></div>
<svg class="r" style="left:0px;top:620px;" width="20" height="20" viewBox="0 0 20 20"><rect x="2" y="2" width="15.5" height="16" fill="#fff"/><rect x="2" y="6" width="6" height="8" fill="url(#bg1)"/><path d="M9 6.5 H15.5 M13 4.2 L15.8 6.5 L13 8.8" fill="none" stroke="#000" stroke-width="1.3"/><path d="M15.5 6.8 L9.5 13.2" stroke="#e0e0e0" stroke-width="0.6"/><path d="M16 13.5 H9.5 M12 11.2 L9.2 13.5 L12 15.8" fill="none" stroke="#000" stroke-width="1.3"/><rect x="17" y="2.5" width="1.3" height="16" fill="#000"/></svg>
<div class="t" style="left:20px;top:621px;font-size:12px;line-height:20px;color:#1b1b1b;letter-spacing:-0.25px;">54</div>
<div class="t" style="left:93px;top:621px;font-size:12px;line-height:20px;color:#1b1b1b;letter-spacing:-0.25px;">Ausgang B</div>
<div class="t" style="left:375px;top:621px;font-size:12px;line-height:20px;color:#1b1b1b;letter-spacing:-0.25px;">Sonne: Lamelle anfahren 0..255</div>
<div class="t" style="left:1141px;top:621px;font-size:12px;line-height:20px;color:#1b1b1b;letter-spacing:-0.25px;">1 byte</div>
<div class="t" style="left:1200px;top:621px;font-size:12px;line-height:20px;color:#1b1b1b;">K</div>
<div class="t" style="left:1220px;top:621px;font-size:12px;line-height:20px;color:#1b1b1b;">-</div>
<div class="t" style="left:1240px;top:621px;font-size:12px;line-height:20px;color:#1b1b1b;">S</div>
<div class="t" style="left:1260px;top:621px;font-size:12px;line-height:20px;color:#1b1b1b;">Ü</div>
<div class="t" style="left:1280px;top:621px;font-size:12px;line-height:20px;color:#1b1b1b;">A</div>
<div class="r" style="left:0px;top:640px;width:1423px;height:20px;background:#f2f5f8;"></div>
<svg class="r" style="left:0px;top:640px;" width="20" height="20" viewBox="0 0 20 20"><rect x="2" y="2" width="15.5" height="16" fill="#fff"/><rect x="2" y="6" width="6" height="8" fill="url(#bg1)"/><path d="M9 6.5 H15.5 M13 4.2 L15.8 6.5 L13 8.8" fill="none" stroke="#000" stroke-width="1.3"/><path d="M15.5 6.8 L9.5 13.2" stroke="#e0e0e0" stroke-width="0.6"/><path d="M16 13.5 H9.5 M12 11.2 L9.2 13.5 L12 15.8" fill="none" stroke="#000" stroke-width="1.3"/><rect x="17" y="2.5" width="1.3" height="16" fill="#000"/></svg>
<div class="t" style="left:20px;top:641px;font-size:12px;line-height:20px;color:#1b1b1b;letter-spacing:-0.25px;">55</div>
<div class="t" style="left:93px;top:641px;font-size:12px;line-height:20px;color:#1b1b1b;letter-spacing:-0.25px;">Ausgang B</div>
<div class="t" style="left:375px;top:641px;font-size:12px;line-height:20px;color:#1b1b1b;letter-spacing:-0.25px;">Anwesenheit</div>
<div class="t" style="left:604px;top:641px;font-size:12px;line-height:20px;color:#1b1b1b;letter-spacing:-0.25px;">Sa<i class="u">_</i>Präsens<i class="u">_</i>Schrankraum</div>
<div class="t" style="left:932px;top:641px;font-size:12px;line-height:20px;color:#1b1b1b;letter-spacing:-0.25px;">5/3/11</div>
<div class="t" style="left:1141px;top:641px;font-size:12px;line-height:20px;color:#1b1b1b;letter-spacing:-0.25px;">1 bit</div>
<div class="t" style="left:1319px;top:641px;font-size:12px;line-height:20px;color:#1b1b1b;letter-spacing:-0.25px;">Schalten</div>
<div class="t" style="left:1200px;top:641px;font-size:12px;line-height:20px;color:#1b1b1b;">K</div>
<div class="t" style="left:1220px;top:641px;font-size:12px;line-height:20px;color:#1b1b1b;">-</div>
<div class="t" style="left:1240px;top:641px;font-size:12px;line-height:20px;color:#1b1b1b;">S</div>
<div class="t" style="left:1260px;top:641px;font-size:12px;line-height:20px;color:#1b1b1b;">Ü</div>
<div class="t" style="left:1280px;top:641px;font-size:12px;line-height:20px;color:#1b1b1b;">A</div>
<div class="r" style="left:0px;top:660px;width:1423px;height:20px;background:#ffffff;"></div>
<svg class="r" style="left:0px;top:660px;" width="20" height="20" viewBox="0 0 20 20"><rect x="2" y="2" width="15.5" height="16" fill="#fff"/><rect x="2" y="6" width="6" height="8" fill="url(#bg1)"/><path d="M9 6.5 H15.5 M13 4.2 L15.8 6.5 L13 8.8" fill="none" stroke="#000" stroke-width="1.3"/><path d="M15.5 6.8 L9.5 13.2" stroke="#e0e0e0" stroke-width="0.6"/><path d="M16 13.5 H9.5 M12 11.2 L9.2 13.5 L12 15.8" fill="none" stroke="#000" stroke-width="1.3"/><rect x="17" y="2.5" width="1.3" height="16" fill="#000"/></svg>
<div class="t" style="left:20px;top:661px;font-size:12px;line-height:20px;color:#1b1b1b;letter-spacing:-0.25px;">56</div>
<div class="t" style="left:93px;top:661px;font-size:12px;line-height:20px;color:#1b1b1b;letter-spacing:-0.25px;">Ausgang B</div>
<div class="t" style="left:375px;top:661px;font-size:12px;line-height:20px;color:#1b1b1b;letter-spacing:-0.25px;">Heizen</div>
<div class="t" style="left:604px;top:661px;font-size:12px;line-height:20px;color:#1b1b1b;letter-spacing:-0.25px;">Sa<i class="u">_</i>Heizen Beschattung</div>
<div class="t" style="left:932px;top:661px;font-size:12px;line-height:20px;color:#1b1b1b;letter-spacing:-0.25px;">0/3/21</div>
<div class="t" style="left:1141px;top:661px;font-size:12px;line-height:20px;color:#1b1b1b;letter-spacing:-0.25px;">1 bit</div>
<div class="t" style="left:1319px;top:661px;font-size:12px;line-height:20px;color:#1b1b1b;letter-spacing:-0.25px;">heizen/kühlen</div>
<div class="t" style="left:1200px;top:661px;font-size:12px;line-height:20px;color:#1b1b1b;">K</div>
<div class="t" style="left:1220px;top:661px;font-size:12px;line-height:20px;color:#1b1b1b;">-</div>
<div class="t" style="left:1240px;top:661px;font-size:12px;line-height:20px;color:#1b1b1b;">S</div>
<div class="t" style="left:1260px;top:661px;font-size:12px;line-height:20px;color:#1b1b1b;">Ü</div>
<div class="t" style="left:1280px;top:661px;font-size:12px;line-height:20px;color:#1b1b1b;">A</div>
<div class="r" style="left:0px;top:680px;width:1423px;height:20px;background:#f2f5f8;"></div>
<svg class="r" style="left:0px;top:680px;" width="20" height="20" viewBox="0 0 20 20"><rect x="2" y="2" width="15.5" height="16" fill="#fff"/><rect x="2" y="6" width="6" height="8" fill="url(#bg1)"/><path d="M9 6.5 H15.5 M13 4.2 L15.8 6.5 L13 8.8" fill="none" stroke="#000" stroke-width="1.3"/><path d="M15.5 6.8 L9.5 13.2" stroke="#e0e0e0" stroke-width="0.6"/><path d="M16 13.5 H9.5 M12 11.2 L9.2 13.5 L12 15.8" fill="none" stroke="#000" stroke-width="1.3"/><rect x="17" y="2.5" width="1.3" height="16" fill="#000"/></svg>
<div class="t" style="left:20px;top:681px;font-size:12px;line-height:20px;color:#1b1b1b;letter-spacing:-0.25px;">57</div>
<div class="t" style="left:93px;top:681px;font-size:12px;line-height:20px;color:#1b1b1b;letter-spacing:-0.25px;">Ausgang B</div>
<div class="t" style="left:375px;top:681px;font-size:12px;line-height:20px;color:#1b1b1b;letter-spacing:-0.25px;">Kühlen</div>
<div class="t" style="left:604px;top:681px;font-size:12px;line-height:20px;color:#1b1b1b;letter-spacing:-0.25px;">Sa<i class="u">_</i>Kühlen Beschattung</div>
<div class="t" style="left:932px;top:681px;font-size:12px;line-height:20px;color:#1b1b1b;letter-spacing:-0.25px;">0/3/22</div>
<div class="t" style="left:1141px;top:681px;font-size:12px;line-height:20px;color:#1b1b1b;letter-spacing:-0.25px;">1 bit</div>
<div class="t" style="left:1319px;top:681px;font-size:12px;line-height:20px;color:#1b1b1b;letter-spacing:-0.25px;">heizen/kühlen</div>
<div class="t" style="left:1200px;top:681px;font-size:12px;line-height:20px;color:#1b1b1b;">K</div>
<div class="t" style="left:1220px;top:681px;font-size:12px;line-height:20px;color:#1b1b1b;">-</div>
<div class="t" style="left:1240px;top:681px;font-size:12px;line-height:20px;color:#1b1b1b;">S</div>
<div class="t" style="left:1260px;top:681px;font-size:12px;line-height:20px;color:#1b1b1b;">Ü</div>
<div class="t" style="left:1280px;top:681px;font-size:12px;line-height:20px;color:#1b1b1b;">A</div>
<div class="r" style="left:0px;top:700px;width:1423px;height:20px;background:#ffffff;"></div>
<svg class="r" style="left:0px;top:700px;" width="20" height="20" viewBox="0 0 20 20"><rect x="2" y="2" width="15.5" height="16" fill="#fff"/><rect x="2" y="6" width="6" height="8" fill="url(#bg1)"/><path d="M9 6.5 H15.5 M13 4.2 L15.8 6.5 L13 8.8" fill="none" stroke="#000" stroke-width="1.3"/><path d="M15.5 6.8 L9.5 13.2" stroke="#e0e0e0" stroke-width="0.6"/><path d="M16 13.5 H9.5 M12 11.2 L9.2 13.5 L12 15.8" fill="none" stroke="#000" stroke-width="1.3"/><rect x="17" y="2.5" width="1.3" height="16" fill="#000"/></svg>
<div class="t" style="left:20px;top:701px;font-size:12px;line-height:20px;color:#1b1b1b;letter-spacing:-0.25px;">58</div>
<div class="t" style="left:93px;top:701px;font-size:12px;line-height:20px;color:#1b1b1b;letter-spacing:-0.25px;">Ausgang B</div>
<div class="t" style="left:375px;top:701px;font-size:12px;line-height:20px;color:#1b1b1b;letter-spacing:-0.25px;">Raumtemperatur empfangen</div>
<div class="t" style="left:604px;top:701px;font-size:12px;line-height:20px;color:#1b1b1b;letter-spacing:-0.25px;">St<i class="u">_</i>We<i class="u">_</i>Raumtemperatur Schrankraum</div>
<div class="t" style="left:932px;top:701px;font-size:12px;line-height:20px;color:#1b1b1b;letter-spacing:-0.25px;">3/3/14</div>
<div class="t" style="left:1141px;top:701px;font-size:12px;line-height:20px;color:#1b1b1b;letter-spacing:-0.25px;">2 bytes</div>
<div class="t" style="left:1319px;top:701px;font-size:12px;line-height:20px;color:#1b1b1b;letter-spacing:-0.25px;">Temperatur (°C)</div>
<div class="t" style="left:1200px;top:701px;font-size:12px;line-height:20px;color:#1b1b1b;">K</div>
<div class="t" style="left:1220px;top:701px;font-size:12px;line-height:20px;color:#1b1b1b;">-</div>
<div class="t" style="left:1240px;top:701px;font-size:12px;line-height:20px;color:#1b1b1b;">S</div>
<div class="t" style="left:1260px;top:701px;font-size:12px;line-height:20px;color:#1b1b1b;">Ü</div>
<div class="t" style="left:1280px;top:701px;font-size:12px;line-height:20px;color:#1b1b1b;">A</div>
<div class="r" style="left:0px;top:720px;width:1423px;height:20px;background:#f2f5f8;"></div>
<svg class="r" style="left:0px;top:720px;" width="20" height="20" viewBox="0 0 20 20"><rect x="2" y="2" width="15.5" height="16" fill="#fff"/><rect x="2" y="6" width="6" height="8" fill="url(#bg1)"/><path d="M9 6.5 H15.5 M13 4.2 L15.8 6.5 L13 8.8" fill="none" stroke="#000" stroke-width="1.3"/><path d="M15.5 6.8 L9.5 13.2" stroke="#e0e0e0" stroke-width="0.6"/><path d="M16 13.5 H9.5 M12 11.2 L9.2 13.5 L12 15.8" fill="none" stroke="#000" stroke-width="1.3"/><rect x="17" y="2.5" width="1.3" height="16" fill="#000"/></svg>
<div class="t" style="left:20px;top:721px;font-size:12px;line-height:20px;color:#1b1b1b;letter-spacing:-0.25px;">61</div>
<div class="t" style="left:93px;top:721px;font-size:12px;line-height:20px;color:#1b1b1b;letter-spacing:-0.25px;">Ausgang B</div>
<div class="t" style="left:375px;top:721px;font-size:12px;line-height:20px;color:#1b1b1b;letter-spacing:-0.25px;">Sperren</div>
<div class="t" style="left:604px;top:721px;font-size:12px;line-height:20px;color:#1b1b1b;letter-spacing:-0.25px;">Sa<i class="u">_</i>Fensterkonntakt Schrankraum</div>
<div class="t" style="left:932px;top:721px;font-size:12px;line-height:20px;color:#1b1b1b;letter-spacing:-0.25px;">5/3/21</div>
<div class="t" style="left:1141px;top:721px;font-size:12px;line-height:20px;color:#1b1b1b;letter-spacing:-0.25px;">1 bit</div>
<div class="t" style="left:1319px;top:721px;font-size:12px;line-height:20px;color:#1b1b1b;letter-spacing:-0.25px;">Schalten</div>
<div class="t" style="left:1200px;top:721px;font-size:12px;line-height:20px;color:#1b1b1b;">K</div>
<div class="t" style="left:1220px;top:721px;font-size:12px;line-height:20px;color:#1b1b1b;">-</div>
<div class="t" style="left:1240px;top:721px;font-size:12px;line-height:20px;color:#1b1b1b;">S</div>
<div class="t" style="left:1260px;top:721px;font-size:12px;line-height:20px;color:#1b1b1b;">Ü</div>
<div class="t" style="left:1280px;top:721px;font-size:12px;line-height:20px;color:#1b1b1b;">A</div>
<div class="r" style="left:0px;top:740px;width:1423px;height:20px;background:#ffffff;"></div>
<svg class="r" style="left:0px;top:740px;" width="20" height="20" viewBox="0 0 20 20"><rect x="2" y="2" width="15.5" height="16" fill="#fff"/><rect x="2" y="6" width="6" height="8" fill="url(#bg1)"/><path d="M9 6.5 H15.5 M13 4.2 L15.8 6.5 L13 8.8" fill="none" stroke="#000" stroke-width="1.3"/><path d="M15.5 6.8 L9.5 13.2" stroke="#e0e0e0" stroke-width="0.6"/><path d="M16 13.5 H9.5 M12 11.2 L9.2 13.5 L12 15.8" fill="none" stroke="#000" stroke-width="1.3"/><rect x="17" y="2.5" width="1.3" height="16" fill="#000"/></svg>
<div class="t" style="left:20px;top:741px;font-size:12px;line-height:20px;color:#1b1b1b;letter-spacing:-0.25px;">63</div>
<div class="t" style="left:93px;top:741px;font-size:12px;line-height:20px;color:#1b1b1b;letter-spacing:-0.25px;">Ausgang B</div>
<div class="t" style="left:375px;top:741px;font-size:12px;line-height:20px;color:#1b1b1b;letter-spacing:-0.25px;">Status Höhe 0<i class="e">...</i>255</div>
<div class="t" style="left:604px;top:741px;font-size:12px;line-height:20px;color:#1b1b1b;letter-spacing:-0.25px;">St<i class="u">_</i>Pos<i class="u">_</i>Tür Schrankraum</div>
<div class="t" style="left:932px;top:741px;font-size:12px;line-height:20px;color:#1b1b1b;letter-spacing:-0.25px;">2/3/5</div>
<div class="t" style="left:1141px;top:741px;font-size:12px;line-height:20px;color:#1b1b1b;letter-spacing:-0.25px;">1 byte</div>
<div class="t" style="left:1319px;top:741px;font-size:12px;line-height:20px;color:#1b1b1b;letter-spacing:-0.25px;">Prozent (0..100%)</div>
<div class="t" style="left:1200px;top:741px;font-size:12px;line-height:20px;color:#1b1b1b;">K</div>
<div class="t" style="left:1220px;top:741px;font-size:12px;line-height:20px;color:#1b1b1b;">L</div>
<div class="t" style="left:1240px;top:741px;font-size:12px;line-height:20px;color:#1b1b1b;">-</div>
<div class="t" style="left:1260px;top:741px;font-size:12px;line-height:20px;color:#1b1b1b;">Ü</div>
<div class="t" style="left:1280px;top:741px;font-size:12px;line-height:20px;color:#1b1b1b;">-</div>
<div class="r" style="left:0px;top:760px;width:1423px;height:20px;background:#f2f5f8;"></div>
<svg class="r" style="left:0px;top:760px;" width="20" height="20" viewBox="0 0 20 20"><rect x="2" y="2" width="15.5" height="16" fill="#fff"/><rect x="2" y="6" width="6" height="8" fill="url(#bg1)"/><path d="M9 6.5 H15.5 M13 4.2 L15.8 6.5 L13 8.8" fill="none" stroke="#000" stroke-width="1.3"/><path d="M15.5 6.8 L9.5 13.2" stroke="#e0e0e0" stroke-width="0.6"/><path d="M16 13.5 H9.5 M12 11.2 L9.2 13.5 L12 15.8" fill="none" stroke="#000" stroke-width="1.3"/><rect x="17" y="2.5" width="1.3" height="16" fill="#000"/></svg>
<div class="t" style="left:20px;top:761px;font-size:12px;line-height:20px;color:#1b1b1b;letter-spacing:-0.25px;">64</div>
<div class="t" style="left:93px;top:761px;font-size:12px;line-height:20px;color:#1b1b1b;letter-spacing:-0.25px;">Ausgang B</div>
<div class="t" style="left:375px;top:761px;font-size:12px;line-height:20px;color:#1b1b1b;letter-spacing:-0.25px;">Status Lamelle 0<i class="e">...</i>255</div>
<div class="t" style="left:604px;top:761px;font-size:12px;line-height:20px;color:#1b1b1b;letter-spacing:-0.25px;">St<i class="u">_</i>Lamm.<i class="u">_</i>Tür Schrankraum</div>
<div class="t" style="left:932px;top:761px;font-size:12px;line-height:20px;color:#1b1b1b;letter-spacing:-0.25px;">2/3/6</div>
<div class="t" style="left:1141px;top:761px;font-size:12px;line-height:20px;color:#1b1b1b;letter-spacing:-0.25px;">1 byte</div>
<div class="t" style="left:1319px;top:761px;font-size:12px;line-height:20px;color:#1b1b1b;letter-spacing:-0.25px;">Prozent (0..100%)</div>
<div class="t" style="left:1200px;top:761px;font-size:12px;line-height:20px;color:#1b1b1b;">K</div>
<div class="t" style="left:1220px;top:761px;font-size:12px;line-height:20px;color:#1b1b1b;">L</div>
<div class="t" style="left:1240px;top:761px;font-size:12px;line-height:20px;color:#1b1b1b;">-</div>
<div class="t" style="left:1260px;top:761px;font-size:12px;line-height:20px;color:#1b1b1b;">Ü</div>
<div class="t" style="left:1280px;top:761px;font-size:12px;line-height:20px;color:#1b1b1b;">-</div>
<div class="r" style="left:0px;top:780px;width:1423px;height:20px;background:#ffffff;"></div>
<svg class="r" style="left:0px;top:780px;" width="20" height="20" viewBox="0 0 20 20"><rect x="2" y="2" width="15.5" height="16" fill="#fff"/><rect x="2" y="6" width="6" height="8" fill="url(#bg1)"/><path d="M9 6.5 H15.5 M13 4.2 L15.8 6.5 L13 8.8" fill="none" stroke="#000" stroke-width="1.3"/><path d="M15.5 6.8 L9.5 13.2" stroke="#e0e0e0" stroke-width="0.6"/><path d="M16 13.5 H9.5 M12 11.2 L9.2 13.5 L12 15.8" fill="none" stroke="#000" stroke-width="1.3"/><rect x="17" y="2.5" width="1.3" height="16" fill="#000"/></svg>
<div class="t" style="left:20px;top:781px;font-size:12px;line-height:20px;color:#1b1b1b;letter-spacing:-0.25px;">65</div>
<div class="t" style="left:93px;top:781px;font-size:12px;line-height:20px;color:#1b1b1b;letter-spacing:-0.25px;">Ausgang B</div>
<div class="t" style="left:375px;top:781px;font-size:12px;line-height:20px;color:#1b1b1b;letter-spacing:-0.25px;">Status Endlage oben</div>
<div class="t" style="left:604px;top:781px;font-size:12px;line-height:20px;color:#1b1b1b;letter-spacing:-0.25px;">St<i class="u">_</i>Entlage<i class="u">_</i>Oben<i class="u">_</i>Tür Schrankraum</div>
<div class="t" style="left:932px;top:781px;font-size:12px;line-height:20px;color:#1b1b1b;letter-spacing:-0.25px;">2/3/3</div>
<div class="t" style="left:1141px;top:781px;font-size:12px;line-height:20px;color:#1b1b1b;letter-spacing:-0.25px;">1 bit</div>
<div class="t" style="left:1319px;top:781px;font-size:12px;line-height:20px;color:#1b1b1b;letter-spacing:-0.25px;">Schalten</div>
<div class="t" style="left:1200px;top:781px;font-size:12px;line-height:20px;color:#1b1b1b;">K</div>
<div class="t" style="left:1220px;top:781px;font-size:12px;line-height:20px;color:#1b1b1b;">L</div>
<div class="t" style="left:1240px;top:781px;font-size:12px;line-height:20px;color:#1b1b1b;">-</div>
<div class="t" style="left:1260px;top:781px;font-size:12px;line-height:20px;color:#1b1b1b;">Ü</div>
<div class="t" style="left:1280px;top:781px;font-size:12px;line-height:20px;color:#1b1b1b;">-</div>
</div>
<div class="r" style="left:1698px;top:191px;width:14px;height:789px;background:#ffffff;"></div>
<div class="r" style="left:1698px;top:206px;width:14px;height:206px;background:#dadada;"></div>
<svg class="r" style="left:1700px;top:196px;" width="10" height="8" viewBox="0 0 10 8"><path d="M1.5 6 L5 2.5 L8.5 6" fill="none" stroke="#333" stroke-width="2"/></svg>
<svg class="r" style="left:1700px;top:967px;" width="10" height="8" viewBox="0 0 10 8"><path d="M1.5 1.5 L5 5 L8.5 1.5" fill="none" stroke="#333" stroke-width="2"/></svg>
<div class="r" style="left:1712px;top:167px;width:1px;height:827px;background:#dcdcdc;"></div>
<div class="r" style="left:1698px;top:191px;width:1px;height:789px;background:#dcdcdc;"></div>
<div class="r" style="left:275px;top:979px;width:1423px;height:1px;background:#dcdcdc;"></div>
<div class="r" style="left:275px;top:993px;width:1438px;height:1px;background:#dcdcdc;"></div>
<div class="r" style="left:275px;top:980px;width:1437px;height:13px;background:#ffffff;"></div>
<div class="r" style="left:291px;top:980px;width:1314px;height:13px;background:#e3e3e3;"></div>
<svg class="r" style="left:279px;top:982px;" width="8" height="9" viewBox="0 0 8 9"><path d="M6 1 L2.5 4.5 L6 8" fill="none" stroke="#333" stroke-width="2"/></svg>
<svg class="r" style="left:1687px;top:982px;" width="8" height="9" viewBox="0 0 8 9"><path d="M1.5 1 L5.5 4.5 L1.5 8" fill="none" stroke="#333" stroke-width="2"/></svg>
<div class="r" style="left:275px;top:993px;width:1438px;height:23px;background:#f3f4f6;"></div>
<svg class="r" style="left:275px;top:993px;" width="260" height="23" viewBox="0 0 260 23"><path d="M0 0 H160 L152 23 H0 Z" fill="#ffffff"/><path d="M160 0 L152 23" stroke="#dcdcdc"/><path d="M160 0 H247 L239 23" fill="none" stroke="#dcdcdc"/></svg>
<div class="t" style="left:286px;top:994px;font-size:11.6px;line-height:24px;color:#222;letter-spacing:0.278px;">Kommunikationsobjekte</div>
<div class="t" style="left:448px;top:994px;font-size:11.6px;line-height:24px;color:#222;">Parameter</div>
<div class="r" style="left:1713px;top:80px;width:206px;height:936px;background:#f3f4f6;"></div>
<div class="r" style="left:1713px;top:80px;width:1px;height:914px;background:#dcdcdc;"></div>
<div class="r" style="left:1917px;top:80px;width:1px;height:936px;background:#dcdcdc;"></div>
<svg class="r" style="left:1724px;top:86px;" width="17" height="18" viewBox="0 0 17 18"><path d="M1.5 0.5 H11 L15.5 5 V17.5 H1.5 Z" fill="#fff" stroke="#999"/><path d="M11 0.5 V5 H15.5" fill="none" stroke="#999"/><path d="M3.5 4.5 H9 M3.5 7.5 H8 M3.5 10.5 H7 M3.5 13.5 H6" stroke="#555" stroke-width="1"/><rect x="9" y="10" width="1.6" height="6" fill="#3a8fd9"/><rect x="12" y="8" width="1.6" height="8" fill="#f29a1f"/></svg>
<div class="t" style="left:1747px;top:86px;font-size:13.6px;line-height:22px;color:#1e1e1e;">Eigenschaften</div>
<svg class="r" style="left:1901px;top:90px;" width="8" height="11" viewBox="0 0 8 11"><path d="M1.5 1.5 L6 5.5 L1.5 9.5" fill="none" stroke="#777" stroke-width="1.8"/></svg>
<div class="r" style="left:1717px;top:110px;width:64px;height:54px;background:#ffffff;border:1px solid #dcdcdc;border-bottom:none;box-sizing:border-box;"></div>
<svg class="r" style="left:1735px;top:116px;" width="28" height="28" viewBox="0 0 28 28"><g transform="translate(14,14)"><g fill="#a6a6a6"><path d="M-2.2 -11.8 L2.2 -11.8 L2.8 -7 L-2.8 -7 Z" transform="rotate(0)"/><path d="M-2.2 -11.8 L2.2 -11.8 L2.8 -7 L-2.8 -7 Z" transform="rotate(36)"/><path d="M-2.2 -11.8 L2.2 -11.8 L2.8 -7 L-2.8 -7 Z" transform="rotate(72)"/><path d="M-2.2 -11.8 L2.2 -11.8 L2.8 -7 L-2.8 -7 Z" transform="rotate(108)"/><path d="M-2.2 -11.8 L2.2 -11.8 L2.8 -7 L-2.8 -7 Z" transform="rotate(144)"/><path d="M-2.2 -11.8 L2.2 -11.8 L2.8 -7 L-2.8 -7 Z" transform="rotate(180)"/><path d="M-2.2 -11.8 L2.2 -11.8 L2.8 -7 L-2.8 -7 Z" transform="rotate(216)"/><path d="M-2.2 -11.8 L2.2 -11.8 L2.8 -7 L-2.8 -7 Z" transform="rotate(252)"/><path d="M-2.2 -11.8 L2.2 -11.8 L2.8 -7 L-2.8 -7 Z" transform="rotate(288)"/><path d="M-2.2 -11.8 L2.2 -11.8 L2.8 -7 L-2.8 -7 Z" transform="rotate(324)"/></g><circle r="8.6" fill="url(#gg)"/><circle r="4.3" fill="#fff" stroke="#8a8a8a" stroke-width="0.6"/></g></svg>
<svg width="0" height="0" style="position:absolute"><defs><radialGradient id="gg" cx="0.35" cy="0.3" r="0.8"><stop offset="0" stop-color="#e2e2e2"/><stop offset="1" stop-color="#959595"/></radialGradient><radialGradient id="ig" cx="0.4" cy="0.3" r="0.75"><stop offset="0" stop-color="#48a8e8"/><stop offset="1" stop-color="#0a66b0"/></radialGradient><linearGradient id="cg" x1="0" y1="0" x2="0" y2="1"><stop offset="0" stop-color="#fff6e8"/><stop offset="1" stop-color="#f7d9ad"/></linearGradient></defs></svg>
<div class="t" style="left:1717px;top:142px;font-size:10.4px;line-height:20px;color:#222;width:64px;text-align:center;">Einstell...</div>
<svg class="r" style="left:1800px;top:119px;" width="26" height="24" viewBox="0 0 26 24"><path d="M1.5 1.5 H24.5 V16.5 H19 L14 21.5 V16.5 H1.5 Z" fill="url(#cg)" stroke="#6a4a32" stroke-width="1.1"/></svg>
<div class="t" style="left:1782px;top:142px;font-size:10.4px;line-height:20px;color:#222;width:62px;text-align:center;">Komm...</div>
<svg class="r" style="left:1864px;top:117px;" width="26" height="26" viewBox="0 0 26 26"><circle cx="13" cy="13" r="12" fill="url(#ig)"/><circle cx="13" cy="6.5" r="2.1" fill="#fff"/><path d="M10.5 10 H14.8 V19.5 H16.5 V21 H10.5 V19.5 H12 V11.5 H10.5 Z" fill="#fff"/></svg>
<div class="t" style="left:1846px;top:142px;font-size:10.4px;line-height:20px;color:#222;width:62px;text-align:center;">Inform...</div>
<div class="r" style="left:1717px;top:163px;width:196px;height:703px;background:#ffffff;border:1px solid #dcdcdc;box-sizing:border-box;"></div>
<div class="r" style="left:1718px;top:163px;width:62px;height:2px;background:#ffffff;"></div>
<div class="t" style="left:1723px;top:170px;font-size:11.3px;line-height:16px;color:#111;font-weight:bold;">Name</div>
<div class="t" style="left:1723px;top:191px;font-size:11.8px;line-height:16px;color:#222;">Ausgang A</div>
<div class="t" style="left:1723px;top:212px;font-size:11.3px;line-height:16px;color:#111;font-weight:bold;">Beschreibung</div>
<div class="r" style="left:1723px;top:232px;width:184px;height:65px;background:#ffffff;border:1px solid #dadada;box-sizing:border-box;"></div>
<div class="t" style="left:1728px;top:235px;font-size:11px;line-height:16px;color:#222;">Sa_Präsens_Schlafzimmer</div>
<div class="t" style="left:1723px;top:303px;font-size:11.3px;line-height:16px;color:#111;font-weight:bold;">Priorität</div>
<div class="r" style="left:1723px;top:323px;width:184px;height:24px;background:#f0f0f0;border:1px solid #e2e2e2;box-sizing:border-box;"></div>
<div class="t" style="left:1728px;top:327px;font-size:11.8px;line-height:16px;color:#555;">Niedrig</div>
<svg class="r" style="left:1890px;top:332px;" width="11" height="6" viewBox="0 0 11 6"><path d="M0 0 H10 L5 5.5 Z" fill="#333"/></svg>
<div class="t" style="left:1723px;top:353px;font-size:11.3px;line-height:16px;color:#111;font-weight:bold;">Flags</div>
<div class="r" style="left:1723px;top:373px;width:16px;height:16px;background:#ffffff;border:1px solid #dedede;box-sizing:border-box;"></div>
<svg class="r" style="left:1725px;top:375px;" width="12" height="12" viewBox="0 0 12 12"><path d="M1.5 6.5 L4.5 9.5 L10.5 2.5" fill="none" stroke="#5aa64a" stroke-width="1.7"/></svg>
<div class="t" style="left:1744px;top:373px;font-size:11px;line-height:16px;color:#222;">Kommunikation</div>
<div class="r" style="left:1723px;top:390px;width:16px;height:16px;background:#ffffff;border:1px solid #dedede;box-sizing:border-box;"></div>
<div class="t" style="left:1744px;top:390px;font-size:11px;line-height:16px;color:#222;">Lesen</div>
<div class="r" style="left:1723px;top:407px;width:16px;height:16px;background:#ffffff;border:1px solid #dedede;box-sizing:border-box;"></div>
<svg class="r" style="left:1725px;top:409px;" width="12" height="12" viewBox="0 0 12 12"><path d="M1.5 6.5 L4.5 9.5 L10.5 2.5" fill="none" stroke="#5aa64a" stroke-width="1.7"/></svg>
<div class="t" style="left:1744px;top:407px;font-size:11px;line-height:16px;color:#222;">Schreiben</div>
<div class="r" style="left:1723px;top:424px;width:16px;height:16px;background:#ffffff;border:1px solid #dedede;box-sizing:border-box;"></div>
<svg class="r" style="left:1725px;top:426px;" width="12" height="12" viewBox="0 0 12 12"><path d="M1.5 6.5 L4.5 9.5 L10.5 2.5" fill="none" stroke="#5aa64a" stroke-width="1.7"/></svg>
<div class="t" style="left:1744px;top:424px;font-size:11px;line-height:16px;color:#222;">Übertragen</div>
<div class="r" style="left:1723px;top:441px;width:16px;height:16px;background:#ffffff;border:1px solid #dedede;box-sizing:border-box;"></div>
<svg class="r" style="left:1725px;top:443px;" width="12" height="12" viewBox="0 0 12 12"><path d="M1.5 6.5 L4.5 9.5 L10.5 2.5" fill="none" stroke="#5aa64a" stroke-width="1.7"/></svg>
<div class="t" style="left:1744px;top:441px;font-size:11px;line-height:16px;color:#222;">Aktualisieren</div>
<div class="r" style="left:1723px;top:458px;width:16px;height:16px;background:#e6e6e6;"></div>
<div class="t" style="left:1744px;top:458px;font-size:11px;line-height:16px;color:#222;">Lesen bei Init</div>
<div class="t" style="left:1723px;top:480px;font-size:11.3px;line-height:16px;color:#111;font-weight:bold;">Datentyp</div>
<div class="r" style="left:1723px;top:500px;width:184px;height:325px;background:#ffffff;border:1px solid #a8a8a8;box-sizing:border-box;"></div>
<div class="r" style="left:1892px;top:518px;width:14px;height:220px;background:#e6e6e6;"></div>
<div class="r" style="left:1891px;top:501px;width:1px;height:323px;background:#ececec;"></div>
<svg class="r" style="left:1894px;top:505px;" width="10" height="7" viewBox="0 0 10 7"><path d="M1 6 L5 2 L9 6" fill="none" stroke="#333" stroke-width="1.6"/></svg>
<svg class="r" style="left:1894px;top:813px;" width="10" height="7" viewBox="0 0 10 7"><path d="M1 1 L5 5 L9 1" fill="none" stroke="#333" stroke-width="1.6"/></svg>
<div class="t" style="left:1724px;top:502px;font-size:11px;line-height:17px;color:#111;">1.* 1-Bit</div>
<div class="r" style="left:1724px;top:518px;width:168px;height:17px;background:#0064b0;"></div>
<div class="t" style="left:1739px;top:519px;font-size:11px;line-height:17px;color:#fff;">1.001 Schalten</div>
<div class="t" style="left:1739px;top:536px;font-size:11px;line-height:17px;color:#111;">1.002 Boolesch</div>
<div class="t" style="left:1739px;top:553px;font-size:11px;line-height:17px;color:#111;">1.003 Freigeben</div>
<div class="t" style="left:1739px;top:570px;font-size:11px;line-height:17px;color:#111;">1.004 Anstieg</div>
<div class="t" style="left:1739px;top:587px;font-size:11px;line-height:17px;color:#111;">1.005 Alarm</div>
<div class="t" style="left:1739px;top:604px;font-size:11px;line-height:17px;color:#111;">1.006 Binärer Wert</div>
<div class="t" style="left:1739px;top:621px;font-size:11px;line-height:17px;color:#111;">1.007 Schritt</div>
<div class="t" style="left:1739px;top:638px;font-size:11px;line-height:17px;color:#111;">1.008 Auf/Ab</div>
<div class="t" style="left:1739px;top:655px;font-size:11px;line-height:17px;color:#111;">1.009 Öffnen/Schließen</div>
<div class="t" style="left:1739px;top:672px;font-size:11px;line-height:17px;color:#111;">1.010 Start/Stop</div>
<div class="t" style="left:1739px;top:689px;font-size:11px;line-height:17px;color:#111;">1.011 Status</div>
<div class="t" style="left:1739px;top:706px;font-size:11px;line-height:17px;color:#111;">1.012 Invertierung</div>
<div class="t" style="left:1739px;top:723px;font-size:11px;line-height:17px;color:#111;">1.013 Dimmen Sendeart</div>
<div class="t" style="left:1739px;top:740px;font-size:11px;line-height:17px;color:#111;">1.014 Eingangstyp</div>
<div class="t" style="left:1739px;top:757px;font-size:11px;line-height:17px;color:#111;">1.015 Reset</div>
<div class="t" style="left:1739px;top:774px;font-size:11px;line-height:17px;color:#111;">1.016 Bestätigung</div>
<div class="t" style="left:1739px;top:791px;font-size:11px;line-height:17px;color:#111;">1.017 Auslöser</div>
<div class="t" style="left:1739px;top:808px;font-size:11px;line-height:17px;color:#111;">1.018 Belegung</div>
<div class="r" style="left:1723px;top:830px;width:64px;height:23px;background:#efefef;border:1px solid #cdcdcd;box-sizing:border-box;"></div>
<div class="t" style="left:1723px;top:830px;font-size:11px;line-height:23px;color:#222;width:64px;text-align:center;">Standard</div>
<div class="t" style="left:1747px;top:873px;font-size:13.5px;line-height:20px;color:#4a4a4a;letter-spacing:-0.031px;">Suchen und Ersetzen</div>
<div class="t" style="left:1747px;top:903px;font-size:13.5px;line-height:20px;color:#4a4a4a;letter-spacing:0.180px;">Arbeitsbereiche</div>
<div class="t" style="left:1747px;top:933px;font-size:13.5px;line-height:20px;color:#4a4a4a;letter-spacing:0.294px;">Offene Aufgaben</div>
<div class="t" style="left:1747px;top:963px;font-size:13.5px;line-height:20px;color:#4a4a4a;letter-spacing:0.207px;">Laufende Operationen</div>
<div class="t" style="left:1747px;top:993px;font-size:13.5px;line-height:20px;color:#4a4a4a;letter-spacing:0.286px;">Undo Historie</div>
<svg class="r" style="left:1723px;top:873px;" width="18" height="17" viewBox="0 0 18 17"><circle cx="11" cy="6" r="4.8" fill="#fff" stroke="#a07040" stroke-width="1.5"/><path d="M7.5 9.5 L2 15" stroke="#a07040" stroke-width="2.4"/></svg>
<svg class="r" style="left:1723px;top:902px;" width="18" height="18" viewBox="0 0 18 18"><rect x="1" y="1" width="16" height="16" fill="#eee" stroke="#d5d5d5"/><rect x="3" y="3" width="8" height="6" fill="#c8c8c8"/><rect x="3" y="10" width="8" height="5" fill="#d0d0d0"/><rect x="12" y="3" width="3" height="12" fill="#c8c8c8"/></svg>
<svg class="r" style="left:1723px;top:932px;" width="18" height="18" viewBox="0 0 18 18"><circle cx="9" cy="9" r="7.6" fill="#fbf4ea" stroke="#8a6a4a" stroke-width="1.8"/><path d="M9 4 V9 L6 12" fill="none" stroke="#444" stroke-width="1.2"/></svg>
<svg class="r" style="left:1723px;top:962px;" width="18" height="18" viewBox="0 0 18 18"><circle cx="9" cy="9" r="8.3" fill="#7bbd70" stroke="#6aa860" stroke-width="0.6"/><path d="M7 5.5 L12.5 9 L7 12.5 Z" fill="#fff"/></svg>
<svg class="r" style="left:1723px;top:991px;" width="18" height="18" viewBox="0 0 18 18"><g transform="scale(0.8)"><path d="M18.5 14.5 C19 7.5 16 3.5 12.8 3.2 C9.5 3 7 6 6 10.5" fill="none" stroke="url(#ug)" stroke-width="3.6" stroke-linecap="round"/><path d="M0.8 11.5 L4.5 20 L13 15 Z" fill="#e8922e"/></g></svg>
<div class="r" style="left:0px;top:1015px;width:1919px;height:1px;background:#d6d6d6;"></div>
<div class="r" style="left:0px;top:1016px;width:1919px;height:25px;background:#f0f0f0;"></div>
<div class="t" style="left:20px;top:1020px;font-size:10.5px;line-height:19px;color:#222;letter-spacing:-0.014px;">Chris (10.0.0.129:3671)</div>
<div class="r" style="left:318px;top:1017px;width:20px;height:23px;background:#ffffff;border-left:1px solid #e6e6e6;border-right:1px solid #e6e6e6;box-sizing:border-box;"></div>
<svg class="r" style="left:325px;top:1026px;" width="10" height="6" viewBox="0 0 10 6"><path d="M0 5 L4.5 0 L9 5 Z" fill="#666"/></svg>
<div class="r" style="left:343px;top:1021px;width:1px;height:16px;background:#d0d0d0;"></div>
<div class="r" style="left:757px;top:1021px;width:1px;height:16px;background:#d0d0d0;"></div>
<div class="r" style="left:1172px;top:1021px;width:1px;height:16px;background:#d0d0d0;"></div>
<div class="r" style="left:1589px;top:1021px;width:1px;height:16px;background:#d0d0d0;"></div>
<div class="r" style="left:1866px;top:1021px;width:1px;height:16px;background:#d0d0d0;"></div>
<div class="t" style="left:349px;top:1021px;font-size:9.8px;line-height:19px;color:#222;letter-spacing:-0.521px;">1.1 Linie 1</div>
<div class="t" style="left:765px;top:1021px;font-size:9.8px;line-height:19px;color:#222;letter-spacing:-0.420px;">1.1.102 Beschattung JRA/S8.230.5.1 Jal./Rol.Akt.Fahrzt.man.8f,230V,REG</div>
<div class="t" style="left:1180px;top:1021px;font-size:9.8px;line-height:19px;color:#222;letter-spacing:0.001px;">25: Ausgang A - Anwesenheit</div>
<div class="t" style="left:1597px;top:1021px;font-size:9.8px;line-height:19px;color:#222;letter-spacing:-0.026px;">Zuletzt verwendeter Arbeitsbereich</div>
<svg class="r" style="left:1904px;top:1028px;" width="13" height="12" viewBox="0 0 13 12"><g fill="#b8b8b8"><rect x="10" y="2" width="2" height="2"/><rect x="7" y="5" width="2" height="2"/><rect x="10" y="5" width="2" height="2"/><rect x="4" y="8" width="2" height="2"/><rect x="7" y="8" width="2" height="2"/><rect x="10" y="8" width="2" height="2"/></g></svg>
<div class="r" style="left:0px;top:1041px;width:1919px;height:4px;background:#1c1c1c;"></div>
<div class="r" style="left:45px;top:1041px;width:288px;height:4px;background:#d6d6d6;"></div>
<div class="r" style="left:396px;top:1041px;width:24px;height:4px;background:#b8553e;"></div>
<div class="r" style="left:445px;top:1041px;width:15px;height:4px;background:#3a9a3a;"></div>
<div class="r" style="left:497px;top:1041px;width:18px;height:4px;background:#b02a2a;"></div>
<div class="r" style="left:545px;top:1041px;width:26px;height:4px;background:#1a9ab8;"></div>
<div class="r" style="left:590px;top:1041px;width:30px;height:4px;background:#000;"></div>
<div class="r" style="left:642px;top:1041px;width:12px;height:4px;background:#1f7ad0;"></div>
<div class="r" style="left:697px;top:1041px;width:14px;height:4px;background:#1a6ac0;"></div>
<div class="r" style="left:740px;top:1041px;width:12px;height:4px;background:#d8a030;"></div>
<div class="r" style="left:792px;top:1041px;width:17px;height:4px;background:#48b8d0;"></div>
<div class="r" style="left:842px;top:1041px;width:22px;height:4px;background:#2a70c0;"></div>
<div class="r" style="left:902px;top:1041px;width:18px;height:4px;background:#2a8a4a;"></div>
<div class="r" style="left:935px;top:1041px;width:14px;height:4px;background:#6ac06a;"></div>
<div class="r" style="left:949px;top:1041px;width:12px;height:4px;background:#bbb;"></div>
<div class="r" style="left:972px;top:1041px;width:10px;height:4px;background:#3a3a3a;"></div>
<div class="r" style="left:983px;top:1041px;width:15px;height:4px;background:#2aa04a;"></div>
<div class="r" style="left:1000px;top:1041px;width:10px;height:4px;background:#333;"></div>
<div class="r" style="left:1052px;top:1041px;width:8px;height:4px;background:#c8a070;"></div>
<div class="r" style="left:1458px;top:1041px;width:10px;height:4px;background:#3a8ad0;"></div>
<div class="r" style="left:1818px;top:1041px;width:32px;height:4px;background:#666;"></div>
</body></html>
